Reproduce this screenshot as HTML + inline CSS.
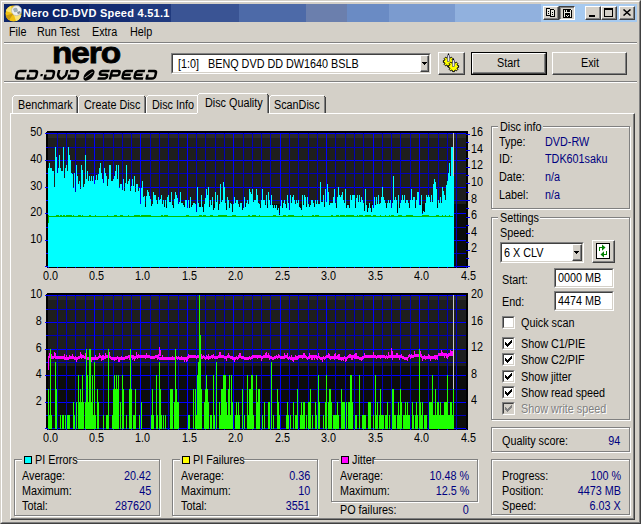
<!DOCTYPE html><html><head><meta charset="utf-8"><style>
html,body{margin:0;padding:0;}
body{width:641px;height:524px;overflow:hidden;background:#d4d0c8;position:relative;font-family:"Liberation Sans",sans-serif;}
.o{position:absolute;}
.t{font:12px/13px "Liberation Sans",sans-serif;white-space:pre;transform:scaleX(0.9);transform-origin:0 0;}
.r{transform-origin:100% 0;}
svg{display:block}
</style></head><body><div style="position:absolute;left:0;top:0;width:641px;height:524px;box-sizing:border-box;border-top:1px solid #d4d0c8;border-left:1px solid #d4d0c8;border-right:1px solid #404040;border-bottom:1px solid #404040;"></div>
<div style="position:absolute;left:1px;top:1px;width:639px;height:522px;box-sizing:border-box;border-top:1px solid #fff;border-left:1px solid #fff;border-right:1px solid #808080;border-bottom:1px solid #808080;"></div>
<div style="position:absolute;left:4px;top:4px;width:633px;height:18px;background:linear-gradient(to right,#0c2468 0px,#0c2468 85px,#142c72 85px,#142c72 126px,#203a7e 126px,#203a7e 167px,#3a5494 167px,#3a5494 235px,#4d6aa8 235px,#4d6aa8 302px,#6b7fad 302px,#6b7fad 343px,#6a8bc4 343px,#6a8bc4 385px,#7b9bcf 385px,#7b9bcf 451px,#91b1de 451px,#91b1de 537px,#a6caf0 537px,#a6caf0 633px);"></div>
<svg style="position:absolute;left:5px;top:5px" width="17" height="17" viewBox="0 0 17 17"><circle cx="8.5" cy="8.5" r="8" fill="#f0c010"/><path d="M8.5 8.5 L0.8 6 A8 8 0 0 1 6 0.9z" fill="#fae46a"/><path d="M8.5 8.5 L4 15.2 A8 8 0 0 1 0.6 10.5z" fill="#c89a10"/><path d="M8.5 8.5 L16.4 10 A8 8 0 0 1 11 16.1z" fill="#f8e27a"/><circle cx="11.6" cy="5.6" r="5" fill="#f0f0f0"/><path d="M8 4 Q10 2 12 3 L13 6 Q11 8 9 7z" fill="#a0b0b8"/><path d="M12 7 L15 6 L15.5 8 L13 9.5z" fill="#889098"/><circle cx="11.6" cy="5.6" r="5" fill="none" stroke="#b0b0a0" stroke-width="0.6"/></svg>
<div style="position:absolute;left:23px;top:7px;font:bold 11px/13px 'Liberation Sans',sans-serif;color:#fff;letter-spacing:0.25px;white-space:pre">Nero CD-DVD Speed 4.51.1</div>
<div style="position:absolute;left:543px;top:6px;width:16px;height:14px;box-sizing:border-box;border-top:1px solid #fff;border-left:1px solid #fff;border-right:1px solid #404040;border-bottom:1px solid #404040;background:#d4d0c8;"><div style="position:absolute;left:0;top:0;right:0;bottom:0;border-right:1px solid #808080;border-bottom:1px solid #808080;"></div></div>
<div style="position:absolute;left:546px;top:8px;width:4px;height:1px;background:#000"></div><div style="position:absolute;left:550px;top:9px;width:1px;height:1px;background:#000"></div><div style="position:absolute;left:546px;top:8px;width:1px;height:8px;background:#000"></div><div style="position:absolute;left:546px;top:15px;width:5px;height:1px;background:#000"></div><div style="position:absolute;left:550px;top:9px;width:1px;height:7px;background:#000"></div><div style="position:absolute;left:550px;top:9px;width:4px;height:1px;background:#000"></div><div style="position:absolute;left:554px;top:10px;width:1px;height:1px;background:#000"></div><div style="position:absolute;left:550px;top:16px;width:5px;height:1px;background:#000"></div><div style="position:absolute;left:554px;top:10px;width:1px;height:7px;background:#000"></div>
<div style="position:absolute;left:547px;top:9px;width:3px;height:6px;background:#e8e8e0"></div><div style="position:absolute;left:551px;top:10px;width:3px;height:6px;background:#e8e8e0"></div>
<div style="position:absolute;left:548px;top:11px;width:1px;height:1px;background:#000"></div><div style="position:absolute;left:548px;top:13px;width:1px;height:1px;background:#000"></div><div style="position:absolute;left:552px;top:12px;width:1px;height:1px;background:#000"></div><div style="position:absolute;left:552px;top:14px;width:1px;height:1px;background:#000"></div>
<div style="position:absolute;left:559px;top:6px;width:16px;height:14px;box-sizing:border-box;border-top:1px solid #404040;border-left:1px solid #404040;border-right:1px solid #fff;border-bottom:1px solid #fff;background:#d4d0c8"><div style="position:absolute;left:0;top:0;right:0;bottom:0;border-top:1px solid #808080;border-left:1px solid #808080;"></div></div>
<div style="position:absolute;left:563px;top:9px;width:9px;height:9px;background:#000"></div>
<div style="position:absolute;left:564px;top:10px;width:1px;height:7px;background:#e8e8e0"></div><div style="position:absolute;left:570px;top:10px;width:1px;height:7px;background:#e8e8e0"></div><div style="position:absolute;left:564px;top:12px;width:7px;height:2px;background:#e8e8e0"></div><div style="position:absolute;left:566px;top:10px;width:1px;height:2px;background:#e8e8e0"></div><div style="position:absolute;left:566px;top:15px;width:1px;height:1px;background:#e8e8e0"></div><div style="position:absolute;left:567px;top:16px;width:1px;height:1px;background:#e8e8e0"></div><div style="position:absolute;left:568px;top:15px;width:1px;height:1px;background:#e8e8e0"></div><div style="position:absolute;left:571px;top:9px;width:1px;height:1px;background:#e8e8e0"></div>
<div style="position:absolute;left:565px;top:13px;width:5px;height:1px;background:#000"></div>
<div style="position:absolute;left:585px;top:6px;width:16px;height:14px;box-sizing:border-box;border-top:1px solid #fff;border-left:1px solid #fff;border-right:1px solid #404040;border-bottom:1px solid #404040;background:#d4d0c8;"><div style="position:absolute;left:0;top:0;right:0;bottom:0;border-right:1px solid #808080;border-bottom:1px solid #808080;"></div></div>
<div style="position:absolute;left:589px;top:15px;width:6px;height:2px;background:#000"></div>
<div style="position:absolute;left:601px;top:6px;width:16px;height:14px;box-sizing:border-box;border-top:1px solid #fff;border-left:1px solid #fff;border-right:1px solid #404040;border-bottom:1px solid #404040;background:#d4d0c8;"><div style="position:absolute;left:0;top:0;right:0;bottom:0;border-right:1px solid #808080;border-bottom:1px solid #808080;"></div></div>
<div style="position:absolute;left:604px;top:8px;width:9px;height:9px;box-sizing:border-box;border:1px solid #000;border-top-width:2px"></div>
<div style="position:absolute;left:619px;top:6px;width:16px;height:14px;box-sizing:border-box;border-top:1px solid #fff;border-left:1px solid #fff;border-right:1px solid #404040;border-bottom:1px solid #404040;background:#d4d0c8;"><div style="position:absolute;left:0;top:0;right:0;bottom:0;border-right:1px solid #808080;border-bottom:1px solid #808080;"></div></div>
<svg style="position:absolute;left:623px;top:9px" width="8" height="7"><path d="M0.5 0.5 L7.5 6.5 M7.5 0.5 L0.5 6.5" stroke="#000" stroke-width="1.5"/></svg>
<div class="o" style="left:9px;top:26px;"><div class="t" style="color:#000;">File</div></div>
<div class="o" style="left:37px;top:26px;"><div class="t" style="color:#000;">Run Test</div></div>
<div class="o" style="left:92px;top:26px;"><div class="t" style="color:#000;">Extra</div></div>
<div class="o" style="left:130px;top:26px;"><div class="t" style="color:#000;">Help</div></div>
<div style="position:absolute;left:4px;top:42px;width:633px;height:1px;background:#808080"></div>
<div style="position:absolute;left:4px;top:43px;width:633px;height:1px;background:#fff"></div>
<div style="position:absolute;left:4px;top:81px;width:633px;height:1px;background:#808080"></div>
<div style="position:absolute;left:4px;top:82px;width:633px;height:1px;background:#fff"></div><svg style="position:absolute;left:0;top:40px" width="170" height="44" viewBox="0 0 170 44"><text x="52" y="22.6" font-family="Liberation Sans" font-weight="bold" font-size="30" textLength="68" lengthAdjust="spacingAndGlyphs" stroke="#000" stroke-width="0.8" letter-spacing="-1">nero</text></svg>
<svg style="position:absolute;left:0;top:0" width="170" height="90" viewBox="0 0 170 90"><g transform="translate(0 79) skewX(-14) translate(0 -79)"><g fill="none" stroke="#000" stroke-width="2.5" stroke-linejoin="round"><path transform="translate(14.5 70)" d="M10 1 H3.5 Q1 1 1 3.5 V6 Q1 8.5 3.5 8.5 H10"/><path transform="translate(26.5 70)" d="M0.5 1 H6.5 Q9 1 9 3.5 V6 Q9 8.5 6.5 8.5 H1 V4.5"/><path transform="translate(43.5 70)" d="M0.5 1 H6.5 Q9 1 9 3.5 V6 Q9 8.5 6.5 8.5 H1 V4.5"/><path transform="translate(56 70)" d="M1 0 V4.5 Q1 5.5 2 6.5 L4 8.5 H6 L8 6.5 Q9 5.5 9 4.5 V0"/><path transform="translate(67.5 70)" d="M0.5 1 H6.5 Q9 1 9 3.5 V6 Q9 8.5 6.5 8.5 H1 V4.5"/><path transform="translate(97.5 70)" d="M10 1 H3 Q1 1 1 2.8 Q1 4.7 3 4.7 H7 Q9 4.7 9 6.6 Q9 8.5 7 8.5 H0"/><path transform="translate(109 70)" d="M1 9.5 V1 H7 Q9 1 9 3 V3.6 Q9 5.6 7 5.6 H2"/><path transform="translate(121 70)" d="M10 1 H3.5 Q1 1 1 3.5 V6 Q1 8.5 3.5 8.5 H10 M2 4.75 H8.5"/><path transform="translate(133 70)" d="M10 1 H3.5 Q1 1 1 3.5 V6 Q1 8.5 3.5 8.5 H10 M2 4.75 H8.5"/><path transform="translate(145.5 70)" d="M0.5 1 H6.5 Q9 1 9 3.5 V6 Q9 8.5 6.5 8.5 H1 V4.5"/></g><rect x="39.5" y="74" width="2.2" height="2.2" fill="#000"/><ellipse cx="88" cy="75" rx="4.2" ry="6.2" transform="rotate(35 88 75)" fill="#000"/><path d="M84.5 78 L91 72" stroke="#d4d0c8" stroke-width="1"/></g></svg>
<div style="position:absolute;left:171px;top:53px;width:260px;height:21px;box-sizing:border-box;border-top:1px solid #808080;border-left:1px solid #808080;border-right:1px solid #fff;border-bottom:1px solid #fff;"><div style="position:absolute;left:0;top:0;right:0;bottom:0;border-top:1px solid #404040;border-left:1px solid #404040;border-right:1px solid #d4d0c8;border-bottom:1px solid #d4d0c8;background:#fff"></div></div>
<div style="position:absolute;left:420px;top:55px;width:9px;height:17px;box-sizing:border-box;border-top:1px solid #fff;border-left:1px solid #fff;border-right:1px solid #404040;border-bottom:1px solid #404040;background:#d4d0c8;"><div style="position:absolute;left:0;top:0;right:0;bottom:0;border-right:1px solid #808080;border-bottom:1px solid #808080;"></div></div>
<div style="position:absolute;left:422px;top:62px;width:5px;height:1px;background:#000"></div><div style="position:absolute;left:423px;top:63px;width:3px;height:1px;background:#000"></div><div style="position:absolute;left:424px;top:64px;width:1px;height:1px;background:#000"></div>
<div class="o" style="left:178px;top:58px;"><div class="t" style="color:#000;">[1:0]   BENQ DVD DD DW1640 BSLB</div></div>
<div style="position:absolute;left:438px;top:52px;width:27px;height:23px;box-sizing:border-box;border-top:1px solid #fff;border-left:1px solid #fff;border-right:1px solid #404040;border-bottom:1px solid #404040;background:#d4d0c8;"><div style="position:absolute;left:0;top:0;right:0;bottom:0;border-right:1px solid #808080;border-bottom:1px solid #808080;"></div></div>
<svg style="position:absolute;left:438px;top:52px" width="27" height="23" viewBox="0 0 27 23"><polygon points="14.17,8.18 15.61,8.53 15.61,10.47 14.17,10.82 14.03,11.16 14.80,12.42 13.42,13.80 12.16,13.03 11.82,13.17 11.47,14.61 9.53,14.61 9.18,13.17 8.84,13.03 7.58,13.80 6.20,12.42 6.97,11.16 6.83,10.82 5.39,10.47 5.39,8.53 6.83,8.18 6.97,7.84 6.20,6.58 7.58,5.20 8.84,5.97 9.18,5.83 9.53,4.39 11.47,4.39 11.82,5.83 12.16,5.97 13.42,5.20 14.80,6.58 14.03,7.84" fill="#ffff00" stroke="#000" stroke-width="1"/><polygon points="19.17,13.18 20.61,13.53 20.61,15.47 19.17,15.82 19.03,16.16 19.80,17.42 18.42,18.80 17.16,18.03 16.82,18.17 16.47,19.61 14.53,19.61 14.18,18.17 13.84,18.03 12.58,18.80 11.20,17.42 11.97,16.16 11.83,15.82 10.39,15.47 10.39,13.53 11.83,13.18 11.97,12.84 11.20,11.58 12.58,10.20 13.84,10.97 14.18,10.83 14.53,9.39 16.47,9.39 16.82,10.83 17.16,10.97 18.42,10.20 19.80,11.58 19.03,12.84" fill="#ffff00" stroke="#000" stroke-width="1"/><rect x="9.5" y="3" width="2" height="6.5" fill="#e8e8f0" stroke="#404060" stroke-width="0.6"/><rect x="14.5" y="8" width="2" height="6.5" fill="#e8e8f0" stroke="#404060" stroke-width="0.6"/><rect x="10" y="1.5" width="1" height="1.5" fill="#000"/><rect x="15" y="6.5" width="1" height="1.5" fill="#000"/></svg>
<div style="position:absolute;left:471px;top:52px;width:76px;height:23px;box-sizing:border-box;border:1px solid #000"></div>
<div style="position:absolute;left:472px;top:53px;width:74px;height:21px;box-sizing:border-box;border-top:1px solid #fff;border-left:1px solid #fff;border-right:1px solid #404040;border-bottom:1px solid #404040;background:#d4d0c8;"><div style="position:absolute;left:0;top:0;right:0;bottom:0;border-right:1px solid #808080;border-bottom:1px solid #808080;"></div></div>
<div class="o" style="left:497px;top:57px;"><div class="t" style="color:#000;">Start</div></div>
<div style="position:absolute;left:552px;top:52px;width:75px;height:23px;box-sizing:border-box;border-top:1px solid #fff;border-left:1px solid #fff;border-right:1px solid #404040;border-bottom:1px solid #404040;background:#d4d0c8;"><div style="position:absolute;left:0;top:0;right:0;bottom:0;border-right:1px solid #808080;border-bottom:1px solid #808080;"></div></div>
<div class="o" style="left:581px;top:57px;"><div class="t" style="color:#000;">Exit</div></div><div style="position:absolute;left:10px;top:113px;width:625px;height:407px;box-sizing:border-box;border-top:1px solid #fff;border-left:1px solid #fff;border-right:1px solid #404040;border-bottom:1px solid #404040;"><div style="position:absolute;left:0;top:0;right:0;bottom:0;border-right:1px solid #808080;border-bottom:1px solid #808080;"></div></div>
<div style="position:absolute;left:12px;top:97px;width:1px;height:16px;background:#fff"></div>
<div style="position:absolute;left:13px;top:96px;width:1px;height:1px;background:#fff"></div>
<div style="position:absolute;left:14px;top:95px;width:62px;height:1px;background:#fff"></div>
<div style="position:absolute;left:76px;top:96px;width:1px;height:17px;background:#808080"></div>
<div style="position:absolute;left:76px;top:96px;width:1px;height:1px;background:#404040"></div>
<div style="position:absolute;left:77px;top:97px;width:1px;height:16px;background:#404040"></div>
<div class="o" style="left:18px;top:99px;"><div class="t" style="color:#000;">Benchmark</div></div>
<div style="position:absolute;left:78px;top:97px;width:1px;height:16px;background:#fff"></div>
<div style="position:absolute;left:79px;top:96px;width:1px;height:1px;background:#fff"></div>
<div style="position:absolute;left:80px;top:95px;width:64px;height:1px;background:#fff"></div>
<div style="position:absolute;left:144px;top:96px;width:1px;height:17px;background:#808080"></div>
<div style="position:absolute;left:144px;top:96px;width:1px;height:1px;background:#404040"></div>
<div style="position:absolute;left:145px;top:97px;width:1px;height:16px;background:#404040"></div>
<div class="o" style="left:84px;top:99px;"><div class="t" style="color:#000;">Create Disc</div></div>
<div style="position:absolute;left:146px;top:97px;width:1px;height:16px;background:#fff"></div>
<div style="position:absolute;left:147px;top:96px;width:1px;height:1px;background:#fff"></div>
<div style="position:absolute;left:148px;top:95px;width:49px;height:1px;background:#fff"></div>
<div style="position:absolute;left:197px;top:96px;width:1px;height:17px;background:#808080"></div>
<div style="position:absolute;left:197px;top:96px;width:1px;height:1px;background:#404040"></div>
<div style="position:absolute;left:198px;top:97px;width:1px;height:16px;background:#404040"></div>
<div class="o" style="left:152px;top:99px;"><div class="t" style="color:#000;">Disc Info</div></div>
<div style="position:absolute;left:269px;top:97px;width:1px;height:16px;background:#fff"></div>
<div style="position:absolute;left:270px;top:96px;width:1px;height:1px;background:#fff"></div>
<div style="position:absolute;left:271px;top:95px;width:53px;height:1px;background:#fff"></div>
<div style="position:absolute;left:324px;top:96px;width:1px;height:17px;background:#808080"></div>
<div style="position:absolute;left:324px;top:96px;width:1px;height:1px;background:#404040"></div>
<div style="position:absolute;left:325px;top:97px;width:1px;height:16px;background:#404040"></div>
<div class="o" style="left:274px;top:99px;"><div class="t" style="color:#000;">ScanDisc</div></div>
<div style="position:absolute;left:197px;top:93px;width:72px;height:21px;background:#d4d0c8"></div>
<div style="position:absolute;left:197px;top:95px;width:1px;height:18px;background:#fff"></div>
<div style="position:absolute;left:198px;top:94px;width:1px;height:1px;background:#fff"></div>
<div style="position:absolute;left:199px;top:93px;width:68px;height:1px;background:#fff"></div>
<div style="position:absolute;left:267px;top:94px;width:1px;height:19px;background:#808080"></div>
<div style="position:absolute;left:267px;top:94px;width:1px;height:1px;background:#404040"></div>
<div style="position:absolute;left:268px;top:95px;width:1px;height:18px;background:#404040"></div>
<div class="o" style="left:205px;top:97px;"><div class="t" style="color:#000;">Disc Quality</div></div><svg style="position:absolute;left:0;top:0" width="641" height="524" shape-rendering="crispEdges"><rect x="46" y="131" width="422" height="137" fill="#000"/><rect x="48" y="133" width="418" height="71" fill="#1e1e1e"/><rect x="48" y="133" width="418" height="5" fill="#2a2a2a"/><rect x="48" y="204" width="418" height="63" fill="#0c0c0c"/><rect x="46" y="131" width="1" height="1" fill="#d4d0c8"/><rect x="46" y="267" width="1" height="1" fill="#d4d0c8"/><rect x="48" y="133" width="418" height="1" fill="#0000ff"/><rect x="48" y="147" width="418" height="1" fill="#0000b8"/><rect x="48" y="160" width="418" height="1" fill="#0000ff"/><rect x="48" y="173" width="418" height="1" fill="#0000b8"/><rect x="48" y="187" width="418" height="1" fill="#0000ff"/><rect x="48" y="200" width="418" height="1" fill="#0000b8"/><rect x="48" y="213" width="418" height="1" fill="#0000ff"/><rect x="48" y="227" width="418" height="1" fill="#0000b8"/><rect x="48" y="240" width="418" height="1" fill="#0000ff"/><rect x="48" y="253" width="418" height="1" fill="#0000b8"/><rect x="48" y="266" width="418" height="1" fill="#0000ff"/><rect x="57" y="133" width="1" height="134" fill="#0000b8"/><rect x="66" y="133" width="1" height="134" fill="#0000b8"/><rect x="75" y="133" width="1" height="134" fill="#0000b8"/><rect x="85" y="133" width="1" height="134" fill="#0000b8"/><rect x="94" y="133" width="1" height="134" fill="#0000ff"/><rect x="103" y="133" width="1" height="134" fill="#0000b8"/><rect x="113" y="133" width="1" height="134" fill="#0000b8"/><rect x="122" y="133" width="1" height="134" fill="#0000b8"/><rect x="131" y="133" width="1" height="134" fill="#0000b8"/><rect x="140" y="133" width="1" height="134" fill="#0000ff"/><rect x="150" y="133" width="1" height="134" fill="#0000b8"/><rect x="159" y="133" width="1" height="134" fill="#0000b8"/><rect x="168" y="133" width="1" height="134" fill="#0000b8"/><rect x="178" y="133" width="1" height="134" fill="#0000b8"/><rect x="187" y="133" width="1" height="134" fill="#0000ff"/><rect x="196" y="133" width="1" height="134" fill="#0000b8"/><rect x="205" y="133" width="1" height="134" fill="#0000b8"/><rect x="215" y="133" width="1" height="134" fill="#0000b8"/><rect x="224" y="133" width="1" height="134" fill="#0000b8"/><rect x="233" y="133" width="1" height="134" fill="#0000ff"/><rect x="243" y="133" width="1" height="134" fill="#0000b8"/><rect x="252" y="133" width="1" height="134" fill="#0000b8"/><rect x="261" y="133" width="1" height="134" fill="#0000b8"/><rect x="270" y="133" width="1" height="134" fill="#0000b8"/><rect x="280" y="133" width="1" height="134" fill="#0000ff"/><rect x="289" y="133" width="1" height="134" fill="#0000b8"/><rect x="298" y="133" width="1" height="134" fill="#0000b8"/><rect x="308" y="133" width="1" height="134" fill="#0000b8"/><rect x="317" y="133" width="1" height="134" fill="#0000b8"/><rect x="326" y="133" width="1" height="134" fill="#0000ff"/><rect x="335" y="133" width="1" height="134" fill="#0000b8"/><rect x="345" y="133" width="1" height="134" fill="#0000b8"/><rect x="354" y="133" width="1" height="134" fill="#0000b8"/><rect x="363" y="133" width="1" height="134" fill="#0000b8"/><rect x="373" y="133" width="1" height="134" fill="#0000ff"/><rect x="382" y="133" width="1" height="134" fill="#0000b8"/><rect x="391" y="133" width="1" height="134" fill="#0000b8"/><rect x="400" y="133" width="1" height="134" fill="#0000b8"/><rect x="410" y="133" width="1" height="134" fill="#0000b8"/><rect x="419" y="133" width="1" height="134" fill="#0000ff"/><rect x="428" y="133" width="1" height="134" fill="#0000b8"/><rect x="438" y="133" width="1" height="134" fill="#0000b8"/><rect x="447" y="133" width="1" height="134" fill="#0000b8"/><rect x="456" y="133" width="1" height="134" fill="#0000b8"/><rect x="453" y="133" width="1" height="134" fill="#c8c8c8"/><path d="M48 267 V168 H49 V163 H50 V168 H51 V168 H52 V171 H53 V171 H54 V187 H55 V147 H56 V157 H57 V173 H58 V168 H59 V155 H60 V168 H61 V171 H62 V171 H63 V147 H64 V178 H65 V168 H66 V165 H67 V171 H68 V147 H69 V155 H70 V160 H71 V173 H72 V174 H73 V188 H74 V173 H75 V192 H76 V165 H77 V176 H78 V184 H79 V181 H80 V189 H81 V165 H82 V170 H83 V187 H84 V184 H85 V155 H86 V179 H87 V171 H88 V181 H89 V176 H90 V181 H91 V176 H92 V181 H93 V176 H94 V184 H95 V180 H96 V175 H97 V180 H98 V174 H99 V168 H100 V163 H101 V173 H102 V179 H103 V183 H104 V168 H105 V173 H106 V176 H107 V186 H108 V179 H109 V165 H110 V165 H111 V181 H112 V181 H113 V179 H114 V176 H115 V171 H116 V165 H117 V179 H118 V165 H119 V188 H120 V184 H121 V184 H122 V190 H123 V179 H124 V191 H125 V183 H126 V165 H127 V184 H128 V181 H129 V179 H130 V191 H131 V186 H132 V179 H133 V186 H134 V176 H135 V192 H136 V184 H137 V184 H138 V191 H139 V188 H140 V204 H141 V188 H142 V181 H143 V197 H144 V196 H145 V207 H146 V196 H147 V190 H148 V192 H149 V196 H150 V199 H151 V206 H152 V204 H153 V192 H154 V195 H155 V195 H156 V200 H157 V204 H158 V197 H159 V200 H160 V199 H161 V195 H162 V204 H163 V200 H164 V207 H165 V200 H166 V208 H167 V197 H168 V195 H169 V202 H170 V202 H171 V192 H172 V205 H173 V208 H174 V199 H175 V192 H176 V195 H177 V198 H178 V204 H179 V202 H180 V192 H181 V203 H182 V203 H183 V205 H184 V207 H185 V200 H186 V200 H187 V208 H188 V200 H189 V208 H190 V197 H191 V207 H192 V205 H193 V203 H194 V203 H195 V204 H196 V212 H197 V187 H198 V203 H199 V207 H200 V207 H201 V195 H202 V207 H203 V212 H204 V204 H205 V198 H206 V189 H207 V195 H208 V187 H209 V207 H210 V200 H211 V205 H212 V197 H213 V210 H214 V208 H215 V192 H216 V202 H217 V195 H218 V210 H219 V204 H220 V184 H221 V202 H222 V200 H223 V182 H224 V187 H225 V203 H226 V210 H227 V197 H228 V200 H229 V208 H230 V203 H231 V204 H232 V212 H233 V204 H234 V197 H235 V203 H236 V200 H237 V200 H238 V204 H239 V207 H240 V203 H241 V203 H242 V210 H243 V208 H244 V197 H245 V207 H246 V203 H247 V200 H248 V204 H249 V189 H250 V192 H251 V194 H252 V189 H253 V202 H254 V200 H255 V200 H256 V189 H257 V195 H258 V203 H259 V204 H260 V208 H261 V200 H262 V189 H263 V200 H264 V200 H265 V205 H266 V195 H267 V208 H268 V192 H269 V200 H270 V205 H271 V195 H272 V205 H273 V208 H274 V205 H275 V208 H276 V205 H277 V210 H278 V208 H279 V215 H280 V206 H281 V200 H282 V208 H283 V203 H284 V200 H285 V204 H286 V208 H287 V195 H288 V203 H289 V210 H290 V195 H291 V203 H292 V197 H293 V195 H294 V200 H295 V204 H296 V200 H297 V203 H298 V200 H299 V207 H300 V208 H301 V210 H302 V195 H303 V205 H304 V195 H305 V197 H306 V207 H307 V197 H308 V204 H309 V207 H310 V205 H311 V200 H312 V200 H313 V203 H314 V207 H315 V200 H316 V204 H317 V200 H318 V204 H319 V204 H320 V182 H321 V202 H322 V202 H323 V195 H324 V207 H325 V189 H326 V202 H327 V184 H328 V192 H329 V205 H330 V203 H331 V203 H332 V203 H333 V197 H334 V189 H335 V203 H336 V208 H337 V197 H338 V187 H339 V195 H340 V197 H341 V195 H342 V192 H343 V200 H344 V203 H345 V189 H346 V208 H347 V205 H348 V205 H349 V208 H350 V195 H351 V200 H352 V195 H353 V195 H354 V195 H355 V208 H356 V198 H357 V195 H358 V202 H359 V195 H360 V202 H361 V197 H362 V200 H363 V203 H364 V211 H365 V189 H366 V205 H367 V212 H368 V208 H369 V203 H370 V208 H371 V212 H372 V205 H373 V208 H374 V197 H375 V205 H376 V197 H377 V204 H378 V195 H379 V204 H380 V203 H381 V197 H382 V187 H383 V197 H384 V200 H385 V203 H386 V208 H387 V203 H388 V200 H389 V203 H390 V200 H391 V208 H392 V203 H393 V176 H394 V200 H395 V197 H396 V200 H397 V213 H398 V195 H399 V208 H400 V203 H401 V200 H402 V195 H403 V200 H404 V195 H405 V203 H406 V200 H407 V200 H408 V203 H409 V208 H410 V200 H411 V189 H412 V200 H413 V197 H414 V197 H415 V208 H416 V200 H417 V192 H418 V192 H419 V205 H420 V205 H421 V195 H422 V214 H423 V211 H424 V212 H425 V203 H426 V195 H427 V197 H428 V195 H429 V197 H430 V202 H431 V195 H432 V202 H433 V184 H434 V179 H435 V182 H436 V189 H437 V208 H438 V200 H439 V203 H440 V197 H441 V203 H442 V187 H443 V191 H444 V195 H445 V200 H446 V185 H447 V181 H448 V173 H449 V163 H450 V176 H451 V147 H452 V147 H453 V176 H454 V267 Z" fill="#00ffff"/><rect x="48" y="216" width="405" height="1" fill="#00c000"/><rect x="56" y="215" width="2" height="1" fill="#00c000"/><rect x="58" y="215" width="1" height="1" fill="#00c000"/><rect x="60" y="215" width="2" height="1" fill="#00c000"/><rect x="63" y="215" width="1" height="1" fill="#00c000"/><rect x="64" y="215" width="1" height="1" fill="#00c000"/><rect x="66" y="215" width="2" height="1" fill="#00c000"/><rect x="67" y="215" width="1" height="1" fill="#00c000"/><rect x="68" y="215" width="3" height="1" fill="#00c000"/><rect x="70" y="215" width="1" height="1" fill="#00c000"/><rect x="71" y="215" width="1" height="1" fill="#00c000"/><rect x="73" y="215" width="1" height="1" fill="#00c000"/><rect x="78" y="215" width="3" height="1" fill="#00c000"/><rect x="79" y="215" width="2" height="1" fill="#00c000"/><rect x="82" y="215" width="1" height="1" fill="#00c000"/><rect x="89" y="215" width="2" height="1" fill="#00c000"/><rect x="95" y="215" width="1" height="1" fill="#00c000"/><rect x="107" y="215" width="1" height="1" fill="#00c000"/><rect x="114" y="215" width="3" height="1" fill="#00c000"/><rect x="120" y="215" width="3" height="1" fill="#00c000"/><rect x="128" y="215" width="1" height="1" fill="#00c000"/><rect x="134" y="215" width="3" height="1" fill="#00c000"/><rect x="137" y="215" width="3" height="1" fill="#00c000"/><rect x="141" y="215" width="3" height="1" fill="#00c000"/><rect x="142" y="215" width="2" height="1" fill="#00c000"/><rect x="144" y="215" width="3" height="1" fill="#00c000"/><rect x="146" y="215" width="2" height="1" fill="#00c000"/><rect x="147" y="215" width="2" height="1" fill="#00c000"/><rect x="149" y="215" width="2" height="1" fill="#00c000"/><rect x="161" y="215" width="2" height="1" fill="#00c000"/><rect x="164" y="215" width="2" height="1" fill="#00c000"/><rect x="166" y="215" width="2" height="1" fill="#00c000"/><rect x="186" y="215" width="3" height="1" fill="#00c000"/><rect x="199" y="215" width="3" height="1" fill="#00c000"/><rect x="203" y="215" width="1" height="1" fill="#00c000"/><rect x="204" y="215" width="2" height="1" fill="#00c000"/><rect x="210" y="215" width="3" height="1" fill="#00c000"/><rect x="218" y="215" width="3" height="1" fill="#00c000"/><rect x="221" y="215" width="3" height="1" fill="#00c000"/><rect x="222" y="215" width="3" height="1" fill="#00c000"/><rect x="223" y="215" width="2" height="1" fill="#00c000"/><rect x="225" y="215" width="1" height="1" fill="#00c000"/><rect x="226" y="215" width="1" height="1" fill="#00c000"/><rect x="232" y="215" width="1" height="1" fill="#00c000"/><rect x="233" y="215" width="2" height="1" fill="#00c000"/><rect x="234" y="215" width="2" height="1" fill="#00c000"/><rect x="248" y="215" width="2" height="1" fill="#00c000"/><rect x="252" y="215" width="3" height="1" fill="#00c000"/><rect x="255" y="215" width="1" height="1" fill="#00c000"/><rect x="259" y="215" width="1" height="1" fill="#00c000"/><rect x="273" y="215" width="3" height="1" fill="#00c000"/><rect x="283" y="215" width="3" height="1" fill="#00c000"/><rect x="285" y="215" width="1" height="1" fill="#00c000"/><rect x="288" y="215" width="3" height="1" fill="#00c000"/><rect x="290" y="215" width="2" height="1" fill="#00c000"/><rect x="292" y="215" width="2" height="1" fill="#00c000"/><rect x="302" y="215" width="1" height="1" fill="#00c000"/><rect x="312" y="215" width="2" height="1" fill="#00c000"/><rect x="315" y="215" width="3" height="1" fill="#00c000"/><rect x="317" y="215" width="2" height="1" fill="#00c000"/><rect x="331" y="215" width="2" height="1" fill="#00c000"/><rect x="336" y="215" width="3" height="1" fill="#00c000"/><rect x="340" y="215" width="3" height="1" fill="#00c000"/><rect x="342" y="215" width="3" height="1" fill="#00c000"/><rect x="343" y="215" width="1" height="1" fill="#00c000"/><rect x="346" y="215" width="3" height="1" fill="#00c000"/><rect x="348" y="215" width="2" height="1" fill="#00c000"/><rect x="350" y="215" width="1" height="1" fill="#00c000"/><rect x="351" y="215" width="3" height="1" fill="#00c000"/><rect x="353" y="215" width="1" height="1" fill="#00c000"/><rect x="357" y="215" width="1" height="1" fill="#00c000"/><rect x="359" y="215" width="3" height="1" fill="#00c000"/><rect x="360" y="215" width="3" height="1" fill="#00c000"/><rect x="361" y="215" width="2" height="1" fill="#00c000"/><rect x="365" y="215" width="2" height="1" fill="#00c000"/><rect x="367" y="215" width="2" height="1" fill="#00c000"/><rect x="368" y="215" width="3" height="1" fill="#00c000"/><rect x="373" y="215" width="3" height="1" fill="#00c000"/><rect x="380" y="215" width="1" height="1" fill="#00c000"/><rect x="385" y="215" width="1" height="1" fill="#00c000"/><rect x="389" y="215" width="1" height="1" fill="#00c000"/><rect x="391" y="215" width="3" height="1" fill="#00c000"/><rect x="392" y="215" width="1" height="1" fill="#00c000"/><rect x="398" y="215" width="3" height="1" fill="#00c000"/><rect x="399" y="215" width="3" height="1" fill="#00c000"/><rect x="406" y="215" width="3" height="1" fill="#00c000"/><rect x="408" y="215" width="3" height="1" fill="#00c000"/><rect x="411" y="215" width="2" height="1" fill="#00c000"/><rect x="422" y="215" width="3" height="1" fill="#00c000"/><rect x="423" y="215" width="1" height="1" fill="#00c000"/><rect x="425" y="215" width="1" height="1" fill="#00c000"/><rect x="426" y="215" width="1" height="1" fill="#00c000"/><rect x="427" y="215" width="2" height="1" fill="#00c000"/><rect x="436" y="215" width="3" height="1" fill="#00c000"/><rect x="437" y="215" width="2" height="1" fill="#00c000"/><rect x="442" y="215" width="1" height="1" fill="#00c000"/><rect x="445" y="215" width="1" height="1" fill="#00c000"/><rect x="449" y="215" width="1" height="1" fill="#00c000"/><rect x="48" y="215" width="1" height="8" fill="#00c000"/><rect x="45" y="133" width="3" height="1" fill="#0000ff"/><rect x="46" y="147" width="2" height="1" fill="#0000ff"/><rect x="45" y="160" width="3" height="1" fill="#0000ff"/><rect x="46" y="173" width="2" height="1" fill="#0000ff"/><rect x="45" y="187" width="3" height="1" fill="#0000ff"/><rect x="46" y="200" width="2" height="1" fill="#0000ff"/><rect x="45" y="213" width="3" height="1" fill="#0000ff"/><rect x="46" y="227" width="2" height="1" fill="#0000ff"/><rect x="45" y="240" width="3" height="1" fill="#0000ff"/><rect x="46" y="253" width="2" height="1" fill="#0000ff"/><rect x="45" y="266" width="3" height="1" fill="#0000ff"/><rect x="466" y="134" width="4" height="1" fill="#0000ff"/><rect x="466" y="142" width="3" height="1" fill="#0000ff"/><rect x="466" y="150" width="4" height="1" fill="#0000ff"/><rect x="466" y="158" width="3" height="1" fill="#0000ff"/><rect x="466" y="167" width="4" height="1" fill="#0000ff"/><rect x="466" y="175" width="3" height="1" fill="#0000ff"/><rect x="466" y="183" width="4" height="1" fill="#0000ff"/><rect x="466" y="192" width="3" height="1" fill="#0000ff"/><rect x="466" y="200" width="4" height="1" fill="#0000ff"/><rect x="466" y="208" width="3" height="1" fill="#0000ff"/><rect x="466" y="217" width="4" height="1" fill="#0000ff"/><rect x="466" y="225" width="3" height="1" fill="#0000ff"/><rect x="466" y="233" width="4" height="1" fill="#0000ff"/><rect x="466" y="242" width="3" height="1" fill="#0000ff"/><rect x="466" y="250" width="4" height="1" fill="#0000ff"/><rect x="466" y="258" width="3" height="1" fill="#0000ff"/><rect x="466" y="266" width="4" height="1" fill="#0000ff"/><rect x="48" y="267" width="1" height="1" fill="#0000ff"/><rect x="57" y="267" width="1" height="1" fill="#0000ff"/><rect x="66" y="267" width="1" height="1" fill="#0000ff"/><rect x="75" y="267" width="1" height="1" fill="#0000ff"/><rect x="85" y="267" width="1" height="1" fill="#0000ff"/><rect x="94" y="267" width="1" height="1" fill="#0000ff"/><rect x="103" y="267" width="1" height="1" fill="#0000ff"/><rect x="113" y="267" width="1" height="1" fill="#0000ff"/><rect x="122" y="267" width="1" height="1" fill="#0000ff"/><rect x="131" y="267" width="1" height="1" fill="#0000ff"/><rect x="140" y="267" width="1" height="1" fill="#0000ff"/><rect x="150" y="267" width="1" height="1" fill="#0000ff"/><rect x="159" y="267" width="1" height="1" fill="#0000ff"/><rect x="168" y="267" width="1" height="1" fill="#0000ff"/><rect x="178" y="267" width="1" height="1" fill="#0000ff"/><rect x="187" y="267" width="1" height="1" fill="#0000ff"/><rect x="196" y="267" width="1" height="1" fill="#0000ff"/><rect x="205" y="267" width="1" height="1" fill="#0000ff"/><rect x="215" y="267" width="1" height="1" fill="#0000ff"/><rect x="224" y="267" width="1" height="1" fill="#0000ff"/><rect x="233" y="267" width="1" height="1" fill="#0000ff"/><rect x="243" y="267" width="1" height="1" fill="#0000ff"/><rect x="252" y="267" width="1" height="1" fill="#0000ff"/><rect x="261" y="267" width="1" height="1" fill="#0000ff"/><rect x="270" y="267" width="1" height="1" fill="#0000ff"/><rect x="280" y="267" width="1" height="1" fill="#0000ff"/><rect x="289" y="267" width="1" height="1" fill="#0000ff"/><rect x="298" y="267" width="1" height="1" fill="#0000ff"/><rect x="308" y="267" width="1" height="1" fill="#0000ff"/><rect x="317" y="267" width="1" height="1" fill="#0000ff"/><rect x="326" y="267" width="1" height="1" fill="#0000ff"/><rect x="335" y="267" width="1" height="1" fill="#0000ff"/><rect x="345" y="267" width="1" height="1" fill="#0000ff"/><rect x="354" y="267" width="1" height="1" fill="#0000ff"/><rect x="363" y="267" width="1" height="1" fill="#0000ff"/><rect x="373" y="267" width="1" height="1" fill="#0000ff"/><rect x="382" y="267" width="1" height="1" fill="#0000ff"/><rect x="391" y="267" width="1" height="1" fill="#0000ff"/><rect x="400" y="267" width="1" height="1" fill="#0000ff"/><rect x="410" y="267" width="1" height="1" fill="#0000ff"/><rect x="419" y="267" width="1" height="1" fill="#0000ff"/><rect x="428" y="267" width="1" height="1" fill="#0000ff"/><rect x="438" y="267" width="1" height="1" fill="#0000ff"/><rect x="447" y="267" width="1" height="1" fill="#0000ff"/><rect x="456" y="267" width="1" height="1" fill="#0000ff"/><rect x="466" y="267" width="1" height="1" fill="#0000ff"/><rect x="46" y="293" width="422" height="137" fill="#000"/><rect x="48" y="295" width="418" height="71" fill="#1e1e1e"/><rect x="48" y="295" width="418" height="5" fill="#2a2a2a"/><rect x="48" y="366" width="418" height="63" fill="#0c0c0c"/><rect x="46" y="293" width="1" height="1" fill="#d4d0c8"/><rect x="46" y="429" width="1" height="1" fill="#d4d0c8"/><rect x="48" y="295" width="418" height="1" fill="#0000ff"/><rect x="48" y="309" width="418" height="1" fill="#0000b8"/><rect x="48" y="322" width="418" height="1" fill="#0000ff"/><rect x="48" y="335" width="418" height="1" fill="#0000b8"/><rect x="48" y="349" width="418" height="1" fill="#0000ff"/><rect x="48" y="362" width="418" height="1" fill="#0000b8"/><rect x="48" y="375" width="418" height="1" fill="#0000ff"/><rect x="48" y="389" width="418" height="1" fill="#0000b8"/><rect x="48" y="402" width="418" height="1" fill="#0000ff"/><rect x="48" y="415" width="418" height="1" fill="#0000b8"/><rect x="48" y="428" width="418" height="1" fill="#0000ff"/><rect x="57" y="295" width="1" height="134" fill="#0000b8"/><rect x="66" y="295" width="1" height="134" fill="#0000b8"/><rect x="75" y="295" width="1" height="134" fill="#0000b8"/><rect x="85" y="295" width="1" height="134" fill="#0000b8"/><rect x="94" y="295" width="1" height="134" fill="#0000ff"/><rect x="103" y="295" width="1" height="134" fill="#0000b8"/><rect x="113" y="295" width="1" height="134" fill="#0000b8"/><rect x="122" y="295" width="1" height="134" fill="#0000b8"/><rect x="131" y="295" width="1" height="134" fill="#0000b8"/><rect x="140" y="295" width="1" height="134" fill="#0000ff"/><rect x="150" y="295" width="1" height="134" fill="#0000b8"/><rect x="159" y="295" width="1" height="134" fill="#0000b8"/><rect x="168" y="295" width="1" height="134" fill="#0000b8"/><rect x="178" y="295" width="1" height="134" fill="#0000b8"/><rect x="187" y="295" width="1" height="134" fill="#0000ff"/><rect x="196" y="295" width="1" height="134" fill="#0000b8"/><rect x="205" y="295" width="1" height="134" fill="#0000b8"/><rect x="215" y="295" width="1" height="134" fill="#0000b8"/><rect x="224" y="295" width="1" height="134" fill="#0000b8"/><rect x="233" y="295" width="1" height="134" fill="#0000ff"/><rect x="243" y="295" width="1" height="134" fill="#0000b8"/><rect x="252" y="295" width="1" height="134" fill="#0000b8"/><rect x="261" y="295" width="1" height="134" fill="#0000b8"/><rect x="270" y="295" width="1" height="134" fill="#0000b8"/><rect x="280" y="295" width="1" height="134" fill="#0000ff"/><rect x="289" y="295" width="1" height="134" fill="#0000b8"/><rect x="298" y="295" width="1" height="134" fill="#0000b8"/><rect x="308" y="295" width="1" height="134" fill="#0000b8"/><rect x="317" y="295" width="1" height="134" fill="#0000b8"/><rect x="326" y="295" width="1" height="134" fill="#0000ff"/><rect x="335" y="295" width="1" height="134" fill="#0000b8"/><rect x="345" y="295" width="1" height="134" fill="#0000b8"/><rect x="354" y="295" width="1" height="134" fill="#0000b8"/><rect x="363" y="295" width="1" height="134" fill="#0000b8"/><rect x="373" y="295" width="1" height="134" fill="#0000ff"/><rect x="382" y="295" width="1" height="134" fill="#0000b8"/><rect x="391" y="295" width="1" height="134" fill="#0000b8"/><rect x="400" y="295" width="1" height="134" fill="#0000b8"/><rect x="410" y="295" width="1" height="134" fill="#0000b8"/><rect x="419" y="295" width="1" height="134" fill="#0000ff"/><rect x="428" y="295" width="1" height="134" fill="#0000b8"/><rect x="438" y="295" width="1" height="134" fill="#0000b8"/><rect x="447" y="295" width="1" height="134" fill="#0000b8"/><rect x="456" y="295" width="1" height="134" fill="#0000b8"/><rect x="48" y="356" width="1" height="3" fill="#ff00ff"/><rect x="49" y="355" width="1" height="3" fill="#ff00ff"/><rect x="49" y="353" width="1" height="2" fill="#ff00ff"/><rect x="50" y="356" width="1" height="3" fill="#ff00ff"/><rect x="51" y="356" width="1" height="3" fill="#ff00ff"/><rect x="51" y="354" width="1" height="2" fill="#ff00ff"/><rect x="52" y="356" width="1" height="3" fill="#ff00ff"/><rect x="53" y="356" width="1" height="3" fill="#ff00ff"/><rect x="54" y="355" width="1" height="3" fill="#ff00ff"/><rect x="54" y="352" width="1" height="3" fill="#ff00ff"/><rect x="55" y="356" width="1" height="3" fill="#ff00ff"/><rect x="55" y="353" width="1" height="3" fill="#ff00ff"/><rect x="56" y="356" width="1" height="3" fill="#ff00ff"/><rect x="57" y="356" width="1" height="3" fill="#ff00ff"/><rect x="58" y="356" width="1" height="3" fill="#ff00ff"/><rect x="59" y="356" width="1" height="3" fill="#ff00ff"/><rect x="60" y="356" width="1" height="3" fill="#ff00ff"/><rect x="61" y="356" width="1" height="3" fill="#ff00ff"/><rect x="62" y="356" width="1" height="3" fill="#ff00ff"/><rect x="63" y="356" width="1" height="3" fill="#ff00ff"/><rect x="64" y="357" width="1" height="3" fill="#ff00ff"/><rect x="64" y="354" width="1" height="3" fill="#ff00ff"/><rect x="65" y="357" width="1" height="3" fill="#ff00ff"/><rect x="66" y="357" width="1" height="3" fill="#ff00ff"/><rect x="66" y="355" width="1" height="2" fill="#ff00ff"/><rect x="67" y="357" width="1" height="3" fill="#ff00ff"/><rect x="68" y="357" width="1" height="3" fill="#ff00ff"/><rect x="69" y="356" width="1" height="3" fill="#ff00ff"/><rect x="69" y="355" width="1" height="1" fill="#ff00ff"/><rect x="70" y="356" width="1" height="3" fill="#ff00ff"/><rect x="71" y="356" width="1" height="3" fill="#ff00ff"/><rect x="72" y="356" width="1" height="3" fill="#ff00ff"/><rect x="72" y="354" width="1" height="2" fill="#ff00ff"/><rect x="73" y="356" width="1" height="3" fill="#ff00ff"/><rect x="74" y="357" width="1" height="3" fill="#ff00ff"/><rect x="75" y="357" width="1" height="3" fill="#ff00ff"/><rect x="75" y="356" width="1" height="1" fill="#ff00ff"/><rect x="76" y="357" width="1" height="3" fill="#ff00ff"/><rect x="76" y="360" width="1" height="2" fill="#ff00ff"/><rect x="77" y="357" width="1" height="3" fill="#ff00ff"/><rect x="78" y="356" width="1" height="3" fill="#ff00ff"/><rect x="79" y="356" width="1" height="3" fill="#ff00ff"/><rect x="80" y="355" width="1" height="3" fill="#ff00ff"/><rect x="80" y="352" width="1" height="3" fill="#ff00ff"/><rect x="81" y="356" width="1" height="3" fill="#ff00ff"/><rect x="81" y="354" width="1" height="2" fill="#ff00ff"/><rect x="82" y="355" width="1" height="3" fill="#ff00ff"/><rect x="83" y="355" width="1" height="3" fill="#ff00ff"/><rect x="84" y="356" width="1" height="3" fill="#ff00ff"/><rect x="85" y="356" width="1" height="3" fill="#ff00ff"/><rect x="85" y="353" width="1" height="3" fill="#ff00ff"/><rect x="86" y="357" width="1" height="3" fill="#ff00ff"/><rect x="86" y="356" width="1" height="1" fill="#ff00ff"/><rect x="87" y="357" width="1" height="3" fill="#ff00ff"/><rect x="88" y="357" width="1" height="3" fill="#ff00ff"/><rect x="89" y="357" width="1" height="3" fill="#ff00ff"/><rect x="90" y="357" width="1" height="3" fill="#ff00ff"/><rect x="90" y="355" width="1" height="2" fill="#ff00ff"/><rect x="91" y="357" width="1" height="3" fill="#ff00ff"/><rect x="91" y="360" width="1" height="2" fill="#ff00ff"/><rect x="92" y="357" width="1" height="3" fill="#ff00ff"/><rect x="93" y="357" width="1" height="3" fill="#ff00ff"/><rect x="94" y="357" width="1" height="3" fill="#ff00ff"/><rect x="95" y="357" width="1" height="3" fill="#ff00ff"/><rect x="95" y="355" width="1" height="2" fill="#ff00ff"/><rect x="96" y="357" width="1" height="3" fill="#ff00ff"/><rect x="97" y="357" width="1" height="3" fill="#ff00ff"/><rect x="98" y="356" width="1" height="3" fill="#ff00ff"/><rect x="99" y="355" width="1" height="3" fill="#ff00ff"/><rect x="99" y="353" width="1" height="2" fill="#ff00ff"/><rect x="100" y="355" width="1" height="3" fill="#ff00ff"/><rect x="101" y="356" width="1" height="3" fill="#ff00ff"/><rect x="101" y="359" width="1" height="2" fill="#ff00ff"/><rect x="102" y="355" width="1" height="3" fill="#ff00ff"/><rect x="102" y="358" width="1" height="2" fill="#ff00ff"/><rect x="103" y="355" width="1" height="3" fill="#ff00ff"/><rect x="103" y="358" width="1" height="2" fill="#ff00ff"/><rect x="104" y="356" width="1" height="3" fill="#ff00ff"/><rect x="105" y="356" width="1" height="3" fill="#ff00ff"/><rect x="105" y="353" width="1" height="3" fill="#ff00ff"/><rect x="106" y="355" width="1" height="3" fill="#ff00ff"/><rect x="107" y="355" width="1" height="3" fill="#ff00ff"/><rect x="108" y="356" width="1" height="3" fill="#ff00ff"/><rect x="108" y="359" width="1" height="2" fill="#ff00ff"/><rect x="109" y="355" width="1" height="3" fill="#ff00ff"/><rect x="109" y="352" width="1" height="3" fill="#ff00ff"/><rect x="110" y="356" width="1" height="3" fill="#ff00ff"/><rect x="111" y="357" width="1" height="3" fill="#ff00ff"/><rect x="112" y="357" width="1" height="3" fill="#ff00ff"/><rect x="113" y="357" width="1" height="3" fill="#ff00ff"/><rect x="114" y="357" width="1" height="3" fill="#ff00ff"/><rect x="114" y="360" width="1" height="1" fill="#ff00ff"/><rect x="115" y="357" width="1" height="3" fill="#ff00ff"/><rect x="116" y="357" width="1" height="3" fill="#ff00ff"/><rect x="117" y="356" width="1" height="3" fill="#ff00ff"/><rect x="118" y="357" width="1" height="3" fill="#ff00ff"/><rect x="118" y="360" width="1" height="2" fill="#ff00ff"/><rect x="119" y="357" width="1" height="3" fill="#ff00ff"/><rect x="119" y="360" width="1" height="2" fill="#ff00ff"/><rect x="120" y="357" width="1" height="3" fill="#ff00ff"/><rect x="121" y="357" width="1" height="3" fill="#ff00ff"/><rect x="121" y="356" width="1" height="1" fill="#ff00ff"/><rect x="122" y="357" width="1" height="3" fill="#ff00ff"/><rect x="123" y="357" width="1" height="3" fill="#ff00ff"/><rect x="124" y="357" width="1" height="3" fill="#ff00ff"/><rect x="125" y="356" width="1" height="3" fill="#ff00ff"/><rect x="126" y="356" width="1" height="3" fill="#ff00ff"/><rect x="127" y="356" width="1" height="3" fill="#ff00ff"/><rect x="128" y="355" width="1" height="3" fill="#ff00ff"/><rect x="129" y="355" width="1" height="3" fill="#ff00ff"/><rect x="129" y="358" width="1" height="2" fill="#ff00ff"/><rect x="130" y="355" width="1" height="3" fill="#ff00ff"/><rect x="131" y="355" width="1" height="3" fill="#ff00ff"/><rect x="132" y="355" width="1" height="3" fill="#ff00ff"/><rect x="132" y="358" width="1" height="2" fill="#ff00ff"/><rect x="133" y="356" width="1" height="3" fill="#ff00ff"/><rect x="133" y="355" width="1" height="1" fill="#ff00ff"/><rect x="134" y="356" width="1" height="3" fill="#ff00ff"/><rect x="134" y="359" width="1" height="2" fill="#ff00ff"/><rect x="135" y="356" width="1" height="3" fill="#ff00ff"/><rect x="136" y="355" width="1" height="3" fill="#ff00ff"/><rect x="136" y="352" width="1" height="3" fill="#ff00ff"/><rect x="137" y="355" width="1" height="3" fill="#ff00ff"/><rect x="137" y="358" width="1" height="1" fill="#ff00ff"/><rect x="138" y="355" width="1" height="3" fill="#ff00ff"/><rect x="138" y="354" width="1" height="1" fill="#ff00ff"/><rect x="139" y="355" width="1" height="3" fill="#ff00ff"/><rect x="140" y="355" width="1" height="3" fill="#ff00ff"/><rect x="141" y="355" width="1" height="3" fill="#ff00ff"/><rect x="142" y="355" width="1" height="3" fill="#ff00ff"/><rect x="143" y="355" width="1" height="3" fill="#ff00ff"/><rect x="144" y="355" width="1" height="3" fill="#ff00ff"/><rect x="145" y="355" width="1" height="3" fill="#ff00ff"/><rect x="145" y="358" width="1" height="1" fill="#ff00ff"/><rect x="146" y="355" width="1" height="3" fill="#ff00ff"/><rect x="146" y="353" width="1" height="2" fill="#ff00ff"/><rect x="147" y="355" width="1" height="3" fill="#ff00ff"/><rect x="148" y="355" width="1" height="3" fill="#ff00ff"/><rect x="149" y="355" width="1" height="3" fill="#ff00ff"/><rect x="150" y="356" width="1" height="3" fill="#ff00ff"/><rect x="151" y="356" width="1" height="3" fill="#ff00ff"/><rect x="152" y="356" width="1" height="3" fill="#ff00ff"/><rect x="153" y="356" width="1" height="3" fill="#ff00ff"/><rect x="154" y="356" width="1" height="3" fill="#ff00ff"/><rect x="155" y="355" width="1" height="3" fill="#ff00ff"/><rect x="156" y="355" width="1" height="3" fill="#ff00ff"/><rect x="157" y="355" width="1" height="3" fill="#ff00ff"/><rect x="157" y="358" width="1" height="2" fill="#ff00ff"/><rect x="158" y="356" width="1" height="3" fill="#ff00ff"/><rect x="158" y="354" width="1" height="2" fill="#ff00ff"/><rect x="159" y="357" width="1" height="3" fill="#ff00ff"/><rect x="160" y="357" width="1" height="3" fill="#ff00ff"/><rect x="161" y="357" width="1" height="3" fill="#ff00ff"/><rect x="162" y="357" width="1" height="3" fill="#ff00ff"/><rect x="162" y="355" width="1" height="2" fill="#ff00ff"/><rect x="163" y="357" width="1" height="3" fill="#ff00ff"/><rect x="164" y="357" width="1" height="3" fill="#ff00ff"/><rect x="165" y="357" width="1" height="3" fill="#ff00ff"/><rect x="166" y="357" width="1" height="3" fill="#ff00ff"/><rect x="167" y="357" width="1" height="3" fill="#ff00ff"/><rect x="168" y="357" width="1" height="3" fill="#ff00ff"/><rect x="169" y="357" width="1" height="3" fill="#ff00ff"/><rect x="170" y="357" width="1" height="3" fill="#ff00ff"/><rect x="171" y="357" width="1" height="3" fill="#ff00ff"/><rect x="172" y="357" width="1" height="3" fill="#ff00ff"/><rect x="172" y="356" width="1" height="1" fill="#ff00ff"/><rect x="173" y="357" width="1" height="3" fill="#ff00ff"/><rect x="174" y="357" width="1" height="3" fill="#ff00ff"/><rect x="175" y="357" width="1" height="3" fill="#ff00ff"/><rect x="176" y="356" width="1" height="3" fill="#ff00ff"/><rect x="177" y="357" width="1" height="3" fill="#ff00ff"/><rect x="178" y="356" width="1" height="3" fill="#ff00ff"/><rect x="179" y="357" width="1" height="3" fill="#ff00ff"/><rect x="180" y="357" width="1" height="3" fill="#ff00ff"/><rect x="181" y="357" width="1" height="3" fill="#ff00ff"/><rect x="181" y="356" width="1" height="1" fill="#ff00ff"/><rect x="182" y="357" width="1" height="3" fill="#ff00ff"/><rect x="183" y="357" width="1" height="3" fill="#ff00ff"/><rect x="184" y="357" width="1" height="3" fill="#ff00ff"/><rect x="184" y="360" width="1" height="2" fill="#ff00ff"/><rect x="185" y="357" width="1" height="3" fill="#ff00ff"/><rect x="186" y="357" width="1" height="3" fill="#ff00ff"/><rect x="186" y="360" width="1" height="2" fill="#ff00ff"/><rect x="187" y="356" width="1" height="3" fill="#ff00ff"/><rect x="187" y="359" width="1" height="2" fill="#ff00ff"/><rect x="188" y="356" width="1" height="3" fill="#ff00ff"/><rect x="188" y="354" width="1" height="2" fill="#ff00ff"/><rect x="189" y="355" width="1" height="3" fill="#ff00ff"/><rect x="190" y="355" width="1" height="3" fill="#ff00ff"/><rect x="191" y="355" width="1" height="3" fill="#ff00ff"/><rect x="192" y="355" width="1" height="3" fill="#ff00ff"/><rect x="193" y="355" width="1" height="3" fill="#ff00ff"/><rect x="194" y="355" width="1" height="3" fill="#ff00ff"/><rect x="195" y="355" width="1" height="3" fill="#ff00ff"/><rect x="196" y="356" width="1" height="3" fill="#ff00ff"/><rect x="197" y="355" width="1" height="3" fill="#ff00ff"/><rect x="198" y="355" width="1" height="3" fill="#ff00ff"/><rect x="199" y="355" width="1" height="3" fill="#ff00ff"/><rect x="200" y="355" width="1" height="3" fill="#ff00ff"/><rect x="200" y="353" width="1" height="2" fill="#ff00ff"/><rect x="201" y="356" width="1" height="3" fill="#ff00ff"/><rect x="201" y="354" width="1" height="2" fill="#ff00ff"/><rect x="202" y="356" width="1" height="3" fill="#ff00ff"/><rect x="203" y="355" width="1" height="3" fill="#ff00ff"/><rect x="204" y="356" width="1" height="3" fill="#ff00ff"/><rect x="205" y="357" width="1" height="3" fill="#ff00ff"/><rect x="206" y="356" width="1" height="3" fill="#ff00ff"/><rect x="206" y="355" width="1" height="1" fill="#ff00ff"/><rect x="207" y="356" width="1" height="3" fill="#ff00ff"/><rect x="208" y="357" width="1" height="3" fill="#ff00ff"/><rect x="208" y="354" width="1" height="3" fill="#ff00ff"/><rect x="209" y="356" width="1" height="3" fill="#ff00ff"/><rect x="210" y="356" width="1" height="3" fill="#ff00ff"/><rect x="211" y="355" width="1" height="3" fill="#ff00ff"/><rect x="212" y="355" width="1" height="3" fill="#ff00ff"/><rect x="212" y="358" width="1" height="1" fill="#ff00ff"/><rect x="213" y="355" width="1" height="3" fill="#ff00ff"/><rect x="213" y="354" width="1" height="1" fill="#ff00ff"/><rect x="214" y="356" width="1" height="3" fill="#ff00ff"/><rect x="215" y="356" width="1" height="3" fill="#ff00ff"/><rect x="216" y="356" width="1" height="3" fill="#ff00ff"/><rect x="217" y="356" width="1" height="3" fill="#ff00ff"/><rect x="218" y="355" width="1" height="3" fill="#ff00ff"/><rect x="219" y="355" width="1" height="3" fill="#ff00ff"/><rect x="219" y="352" width="1" height="3" fill="#ff00ff"/><rect x="220" y="355" width="1" height="3" fill="#ff00ff"/><rect x="220" y="352" width="1" height="3" fill="#ff00ff"/><rect x="221" y="355" width="1" height="3" fill="#ff00ff"/><rect x="222" y="355" width="1" height="3" fill="#ff00ff"/><rect x="223" y="355" width="1" height="3" fill="#ff00ff"/><rect x="224" y="356" width="1" height="3" fill="#ff00ff"/><rect x="225" y="356" width="1" height="3" fill="#ff00ff"/><rect x="226" y="356" width="1" height="3" fill="#ff00ff"/><rect x="226" y="359" width="1" height="2" fill="#ff00ff"/><rect x="227" y="355" width="1" height="3" fill="#ff00ff"/><rect x="228" y="355" width="1" height="3" fill="#ff00ff"/><rect x="228" y="353" width="1" height="2" fill="#ff00ff"/><rect x="229" y="355" width="1" height="3" fill="#ff00ff"/><rect x="230" y="356" width="1" height="3" fill="#ff00ff"/><rect x="231" y="356" width="1" height="3" fill="#ff00ff"/><rect x="232" y="356" width="1" height="3" fill="#ff00ff"/><rect x="232" y="359" width="1" height="1" fill="#ff00ff"/><rect x="233" y="357" width="1" height="3" fill="#ff00ff"/><rect x="234" y="357" width="1" height="3" fill="#ff00ff"/><rect x="234" y="360" width="1" height="2" fill="#ff00ff"/><rect x="235" y="357" width="1" height="3" fill="#ff00ff"/><rect x="236" y="356" width="1" height="3" fill="#ff00ff"/><rect x="237" y="357" width="1" height="3" fill="#ff00ff"/><rect x="238" y="356" width="1" height="3" fill="#ff00ff"/><rect x="238" y="355" width="1" height="1" fill="#ff00ff"/><rect x="239" y="355" width="1" height="3" fill="#ff00ff"/><rect x="239" y="353" width="1" height="2" fill="#ff00ff"/><rect x="240" y="355" width="1" height="3" fill="#ff00ff"/><rect x="240" y="353" width="1" height="2" fill="#ff00ff"/><rect x="241" y="356" width="1" height="3" fill="#ff00ff"/><rect x="242" y="356" width="1" height="3" fill="#ff00ff"/><rect x="243" y="356" width="1" height="3" fill="#ff00ff"/><rect x="244" y="357" width="1" height="3" fill="#ff00ff"/><rect x="245" y="357" width="1" height="3" fill="#ff00ff"/><rect x="246" y="357" width="1" height="3" fill="#ff00ff"/><rect x="247" y="357" width="1" height="3" fill="#ff00ff"/><rect x="248" y="357" width="1" height="3" fill="#ff00ff"/><rect x="249" y="356" width="1" height="3" fill="#ff00ff"/><rect x="250" y="357" width="1" height="3" fill="#ff00ff"/><rect x="251" y="356" width="1" height="3" fill="#ff00ff"/><rect x="252" y="355" width="1" height="3" fill="#ff00ff"/><rect x="252" y="358" width="1" height="1" fill="#ff00ff"/><rect x="253" y="355" width="1" height="3" fill="#ff00ff"/><rect x="254" y="355" width="1" height="3" fill="#ff00ff"/><rect x="255" y="355" width="1" height="3" fill="#ff00ff"/><rect x="256" y="355" width="1" height="3" fill="#ff00ff"/><rect x="257" y="355" width="1" height="3" fill="#ff00ff"/><rect x="257" y="358" width="1" height="1" fill="#ff00ff"/><rect x="258" y="355" width="1" height="3" fill="#ff00ff"/><rect x="259" y="355" width="1" height="3" fill="#ff00ff"/><rect x="260" y="355" width="1" height="3" fill="#ff00ff"/><rect x="261" y="356" width="1" height="3" fill="#ff00ff"/><rect x="261" y="359" width="1" height="2" fill="#ff00ff"/><rect x="262" y="356" width="1" height="3" fill="#ff00ff"/><rect x="263" y="355" width="1" height="3" fill="#ff00ff"/><rect x="264" y="355" width="1" height="3" fill="#ff00ff"/><rect x="265" y="355" width="1" height="3" fill="#ff00ff"/><rect x="265" y="353" width="1" height="2" fill="#ff00ff"/><rect x="266" y="355" width="1" height="3" fill="#ff00ff"/><rect x="266" y="352" width="1" height="3" fill="#ff00ff"/><rect x="267" y="355" width="1" height="3" fill="#ff00ff"/><rect x="268" y="355" width="1" height="3" fill="#ff00ff"/><rect x="268" y="353" width="1" height="2" fill="#ff00ff"/><rect x="269" y="355" width="1" height="3" fill="#ff00ff"/><rect x="269" y="358" width="1" height="2" fill="#ff00ff"/><rect x="270" y="356" width="1" height="3" fill="#ff00ff"/><rect x="271" y="356" width="1" height="3" fill="#ff00ff"/><rect x="272" y="357" width="1" height="3" fill="#ff00ff"/><rect x="273" y="357" width="1" height="3" fill="#ff00ff"/><rect x="274" y="356" width="1" height="3" fill="#ff00ff"/><rect x="275" y="356" width="1" height="3" fill="#ff00ff"/><rect x="276" y="355" width="1" height="3" fill="#ff00ff"/><rect x="277" y="356" width="1" height="3" fill="#ff00ff"/><rect x="278" y="355" width="1" height="3" fill="#ff00ff"/><rect x="278" y="354" width="1" height="1" fill="#ff00ff"/><rect x="279" y="355" width="1" height="3" fill="#ff00ff"/><rect x="280" y="356" width="1" height="3" fill="#ff00ff"/><rect x="281" y="356" width="1" height="3" fill="#ff00ff"/><rect x="282" y="356" width="1" height="3" fill="#ff00ff"/><rect x="283" y="356" width="1" height="3" fill="#ff00ff"/><rect x="284" y="356" width="1" height="3" fill="#ff00ff"/><rect x="284" y="353" width="1" height="3" fill="#ff00ff"/><rect x="285" y="355" width="1" height="3" fill="#ff00ff"/><rect x="286" y="355" width="1" height="3" fill="#ff00ff"/><rect x="287" y="356" width="1" height="3" fill="#ff00ff"/><rect x="287" y="353" width="1" height="3" fill="#ff00ff"/><rect x="288" y="357" width="1" height="3" fill="#ff00ff"/><rect x="289" y="356" width="1" height="3" fill="#ff00ff"/><rect x="290" y="357" width="1" height="3" fill="#ff00ff"/><rect x="291" y="357" width="1" height="3" fill="#ff00ff"/><rect x="291" y="355" width="1" height="2" fill="#ff00ff"/><rect x="292" y="357" width="1" height="3" fill="#ff00ff"/><rect x="292" y="360" width="1" height="1" fill="#ff00ff"/><rect x="293" y="357" width="1" height="3" fill="#ff00ff"/><rect x="293" y="360" width="1" height="2" fill="#ff00ff"/><rect x="294" y="357" width="1" height="3" fill="#ff00ff"/><rect x="295" y="357" width="1" height="3" fill="#ff00ff"/><rect x="295" y="355" width="1" height="2" fill="#ff00ff"/><rect x="296" y="357" width="1" height="3" fill="#ff00ff"/><rect x="296" y="356" width="1" height="1" fill="#ff00ff"/><rect x="297" y="357" width="1" height="3" fill="#ff00ff"/><rect x="297" y="356" width="1" height="1" fill="#ff00ff"/><rect x="298" y="356" width="1" height="3" fill="#ff00ff"/><rect x="298" y="355" width="1" height="1" fill="#ff00ff"/><rect x="299" y="355" width="1" height="3" fill="#ff00ff"/><rect x="300" y="355" width="1" height="3" fill="#ff00ff"/><rect x="301" y="355" width="1" height="3" fill="#ff00ff"/><rect x="302" y="355" width="1" height="3" fill="#ff00ff"/><rect x="302" y="358" width="1" height="1" fill="#ff00ff"/><rect x="303" y="355" width="1" height="3" fill="#ff00ff"/><rect x="303" y="353" width="1" height="2" fill="#ff00ff"/><rect x="304" y="355" width="1" height="3" fill="#ff00ff"/><rect x="304" y="353" width="1" height="2" fill="#ff00ff"/><rect x="305" y="355" width="1" height="3" fill="#ff00ff"/><rect x="306" y="356" width="1" height="3" fill="#ff00ff"/><rect x="307" y="357" width="1" height="3" fill="#ff00ff"/><rect x="308" y="356" width="1" height="3" fill="#ff00ff"/><rect x="309" y="356" width="1" height="3" fill="#ff00ff"/><rect x="309" y="353" width="1" height="3" fill="#ff00ff"/><rect x="310" y="355" width="1" height="3" fill="#ff00ff"/><rect x="311" y="355" width="1" height="3" fill="#ff00ff"/><rect x="311" y="358" width="1" height="2" fill="#ff00ff"/><rect x="312" y="355" width="1" height="3" fill="#ff00ff"/><rect x="312" y="358" width="1" height="2" fill="#ff00ff"/><rect x="313" y="355" width="1" height="3" fill="#ff00ff"/><rect x="314" y="355" width="1" height="3" fill="#ff00ff"/><rect x="314" y="358" width="1" height="2" fill="#ff00ff"/><rect x="315" y="355" width="1" height="3" fill="#ff00ff"/><rect x="316" y="355" width="1" height="3" fill="#ff00ff"/><rect x="316" y="358" width="1" height="1" fill="#ff00ff"/><rect x="317" y="356" width="1" height="3" fill="#ff00ff"/><rect x="317" y="359" width="1" height="1" fill="#ff00ff"/><rect x="318" y="355" width="1" height="3" fill="#ff00ff"/><rect x="318" y="353" width="1" height="2" fill="#ff00ff"/><rect x="319" y="356" width="1" height="3" fill="#ff00ff"/><rect x="320" y="357" width="1" height="3" fill="#ff00ff"/><rect x="321" y="357" width="1" height="3" fill="#ff00ff"/><rect x="322" y="357" width="1" height="3" fill="#ff00ff"/><rect x="322" y="360" width="1" height="2" fill="#ff00ff"/><rect x="323" y="356" width="1" height="3" fill="#ff00ff"/><rect x="324" y="357" width="1" height="3" fill="#ff00ff"/><rect x="325" y="356" width="1" height="3" fill="#ff00ff"/><rect x="326" y="355" width="1" height="3" fill="#ff00ff"/><rect x="327" y="355" width="1" height="3" fill="#ff00ff"/><rect x="328" y="355" width="1" height="3" fill="#ff00ff"/><rect x="328" y="353" width="1" height="2" fill="#ff00ff"/><rect x="329" y="356" width="1" height="3" fill="#ff00ff"/><rect x="329" y="354" width="1" height="2" fill="#ff00ff"/><rect x="330" y="356" width="1" height="3" fill="#ff00ff"/><rect x="330" y="359" width="1" height="1" fill="#ff00ff"/><rect x="331" y="356" width="1" height="3" fill="#ff00ff"/><rect x="332" y="356" width="1" height="3" fill="#ff00ff"/><rect x="333" y="356" width="1" height="3" fill="#ff00ff"/><rect x="334" y="357" width="1" height="3" fill="#ff00ff"/><rect x="334" y="354" width="1" height="3" fill="#ff00ff"/><rect x="335" y="356" width="1" height="3" fill="#ff00ff"/><rect x="335" y="353" width="1" height="3" fill="#ff00ff"/><rect x="336" y="356" width="1" height="3" fill="#ff00ff"/><rect x="337" y="356" width="1" height="3" fill="#ff00ff"/><rect x="337" y="355" width="1" height="1" fill="#ff00ff"/><rect x="338" y="357" width="1" height="3" fill="#ff00ff"/><rect x="338" y="354" width="1" height="3" fill="#ff00ff"/><rect x="339" y="357" width="1" height="3" fill="#ff00ff"/><rect x="339" y="354" width="1" height="3" fill="#ff00ff"/><rect x="340" y="357" width="1" height="3" fill="#ff00ff"/><rect x="341" y="357" width="1" height="3" fill="#ff00ff"/><rect x="341" y="360" width="1" height="1" fill="#ff00ff"/><rect x="342" y="357" width="1" height="3" fill="#ff00ff"/><rect x="343" y="357" width="1" height="3" fill="#ff00ff"/><rect x="343" y="360" width="1" height="1" fill="#ff00ff"/><rect x="344" y="356" width="1" height="3" fill="#ff00ff"/><rect x="345" y="357" width="1" height="3" fill="#ff00ff"/><rect x="345" y="360" width="1" height="2" fill="#ff00ff"/><rect x="346" y="357" width="1" height="3" fill="#ff00ff"/><rect x="346" y="360" width="1" height="1" fill="#ff00ff"/><rect x="347" y="356" width="1" height="3" fill="#ff00ff"/><rect x="348" y="355" width="1" height="3" fill="#ff00ff"/><rect x="349" y="355" width="1" height="3" fill="#ff00ff"/><rect x="349" y="354" width="1" height="1" fill="#ff00ff"/><rect x="350" y="355" width="1" height="3" fill="#ff00ff"/><rect x="350" y="354" width="1" height="1" fill="#ff00ff"/><rect x="351" y="355" width="1" height="3" fill="#ff00ff"/><rect x="351" y="358" width="1" height="2" fill="#ff00ff"/><rect x="352" y="355" width="1" height="3" fill="#ff00ff"/><rect x="352" y="358" width="1" height="2" fill="#ff00ff"/><rect x="353" y="355" width="1" height="3" fill="#ff00ff"/><rect x="354" y="356" width="1" height="3" fill="#ff00ff"/><rect x="354" y="354" width="1" height="2" fill="#ff00ff"/><rect x="355" y="356" width="1" height="3" fill="#ff00ff"/><rect x="355" y="353" width="1" height="3" fill="#ff00ff"/><rect x="356" y="356" width="1" height="3" fill="#ff00ff"/><rect x="356" y="353" width="1" height="3" fill="#ff00ff"/><rect x="357" y="356" width="1" height="3" fill="#ff00ff"/><rect x="358" y="356" width="1" height="3" fill="#ff00ff"/><rect x="359" y="357" width="1" height="3" fill="#ff00ff"/><rect x="360" y="357" width="1" height="3" fill="#ff00ff"/><rect x="361" y="357" width="1" height="3" fill="#ff00ff"/><rect x="361" y="360" width="1" height="1" fill="#ff00ff"/><rect x="362" y="357" width="1" height="3" fill="#ff00ff"/><rect x="362" y="356" width="1" height="1" fill="#ff00ff"/><rect x="363" y="356" width="1" height="3" fill="#ff00ff"/><rect x="364" y="355" width="1" height="3" fill="#ff00ff"/><rect x="364" y="353" width="1" height="2" fill="#ff00ff"/><rect x="365" y="355" width="1" height="3" fill="#ff00ff"/><rect x="366" y="355" width="1" height="3" fill="#ff00ff"/><rect x="367" y="355" width="1" height="3" fill="#ff00ff"/><rect x="368" y="355" width="1" height="3" fill="#ff00ff"/><rect x="369" y="355" width="1" height="3" fill="#ff00ff"/><rect x="370" y="355" width="1" height="3" fill="#ff00ff"/><rect x="371" y="355" width="1" height="3" fill="#ff00ff"/><rect x="372" y="355" width="1" height="3" fill="#ff00ff"/><rect x="373" y="355" width="1" height="3" fill="#ff00ff"/><rect x="373" y="352" width="1" height="3" fill="#ff00ff"/><rect x="374" y="355" width="1" height="3" fill="#ff00ff"/><rect x="375" y="355" width="1" height="3" fill="#ff00ff"/><rect x="376" y="356" width="1" height="3" fill="#ff00ff"/><rect x="377" y="355" width="1" height="3" fill="#ff00ff"/><rect x="378" y="355" width="1" height="3" fill="#ff00ff"/><rect x="379" y="355" width="1" height="3" fill="#ff00ff"/><rect x="380" y="355" width="1" height="3" fill="#ff00ff"/><rect x="380" y="358" width="1" height="1" fill="#ff00ff"/><rect x="381" y="355" width="1" height="3" fill="#ff00ff"/><rect x="382" y="355" width="1" height="3" fill="#ff00ff"/><rect x="383" y="355" width="1" height="3" fill="#ff00ff"/><rect x="384" y="355" width="1" height="3" fill="#ff00ff"/><rect x="385" y="356" width="1" height="3" fill="#ff00ff"/><rect x="386" y="355" width="1" height="3" fill="#ff00ff"/><rect x="387" y="356" width="1" height="3" fill="#ff00ff"/><rect x="388" y="355" width="1" height="3" fill="#ff00ff"/><rect x="388" y="352" width="1" height="3" fill="#ff00ff"/><rect x="389" y="355" width="1" height="3" fill="#ff00ff"/><rect x="390" y="355" width="1" height="3" fill="#ff00ff"/><rect x="391" y="355" width="1" height="3" fill="#ff00ff"/><rect x="392" y="355" width="1" height="3" fill="#ff00ff"/><rect x="392" y="358" width="1" height="2" fill="#ff00ff"/><rect x="393" y="355" width="1" height="3" fill="#ff00ff"/><rect x="394" y="355" width="1" height="3" fill="#ff00ff"/><rect x="395" y="355" width="1" height="3" fill="#ff00ff"/><rect x="396" y="355" width="1" height="3" fill="#ff00ff"/><rect x="396" y="353" width="1" height="2" fill="#ff00ff"/><rect x="397" y="355" width="1" height="3" fill="#ff00ff"/><rect x="397" y="353" width="1" height="2" fill="#ff00ff"/><rect x="398" y="355" width="1" height="3" fill="#ff00ff"/><rect x="399" y="355" width="1" height="3" fill="#ff00ff"/><rect x="399" y="358" width="1" height="2" fill="#ff00ff"/><rect x="400" y="355" width="1" height="3" fill="#ff00ff"/><rect x="401" y="355" width="1" height="3" fill="#ff00ff"/><rect x="401" y="354" width="1" height="1" fill="#ff00ff"/><rect x="402" y="356" width="1" height="3" fill="#ff00ff"/><rect x="403" y="356" width="1" height="3" fill="#ff00ff"/><rect x="404" y="357" width="1" height="3" fill="#ff00ff"/><rect x="405" y="357" width="1" height="3" fill="#ff00ff"/><rect x="406" y="357" width="1" height="3" fill="#ff00ff"/><rect x="407" y="357" width="1" height="3" fill="#ff00ff"/><rect x="407" y="360" width="1" height="1" fill="#ff00ff"/><rect x="408" y="355" width="1" height="3" fill="#ff00ff"/><rect x="409" y="354" width="1" height="3" fill="#ff00ff"/><rect x="410" y="355" width="1" height="3" fill="#ff00ff"/><rect x="410" y="358" width="1" height="1" fill="#ff00ff"/><rect x="411" y="355" width="1" height="3" fill="#ff00ff"/><rect x="411" y="354" width="1" height="1" fill="#ff00ff"/><rect x="412" y="355" width="1" height="3" fill="#ff00ff"/><rect x="413" y="355" width="1" height="3" fill="#ff00ff"/><rect x="414" y="354" width="1" height="3" fill="#ff00ff"/><rect x="414" y="351" width="1" height="3" fill="#ff00ff"/><rect x="415" y="354" width="1" height="3" fill="#ff00ff"/><rect x="416" y="354" width="1" height="3" fill="#ff00ff"/><rect x="417" y="354" width="1" height="3" fill="#ff00ff"/><rect x="418" y="354" width="1" height="3" fill="#ff00ff"/><rect x="419" y="355" width="1" height="3" fill="#ff00ff"/><rect x="420" y="354" width="1" height="3" fill="#ff00ff"/><rect x="420" y="351" width="1" height="3" fill="#ff00ff"/><rect x="421" y="355" width="1" height="3" fill="#ff00ff"/><rect x="421" y="354" width="1" height="1" fill="#ff00ff"/><rect x="422" y="356" width="1" height="3" fill="#ff00ff"/><rect x="422" y="359" width="1" height="2" fill="#ff00ff"/><rect x="423" y="356" width="1" height="3" fill="#ff00ff"/><rect x="424" y="356" width="1" height="3" fill="#ff00ff"/><rect x="424" y="355" width="1" height="1" fill="#ff00ff"/><rect x="425" y="356" width="1" height="3" fill="#ff00ff"/><rect x="425" y="359" width="1" height="1" fill="#ff00ff"/><rect x="426" y="356" width="1" height="3" fill="#ff00ff"/><rect x="427" y="356" width="1" height="3" fill="#ff00ff"/><rect x="428" y="356" width="1" height="3" fill="#ff00ff"/><rect x="428" y="354" width="1" height="2" fill="#ff00ff"/><rect x="429" y="356" width="1" height="3" fill="#ff00ff"/><rect x="429" y="355" width="1" height="1" fill="#ff00ff"/><rect x="430" y="356" width="1" height="3" fill="#ff00ff"/><rect x="430" y="359" width="1" height="2" fill="#ff00ff"/><rect x="431" y="356" width="1" height="3" fill="#ff00ff"/><rect x="432" y="356" width="1" height="3" fill="#ff00ff"/><rect x="433" y="356" width="1" height="3" fill="#ff00ff"/><rect x="434" y="355" width="1" height="3" fill="#ff00ff"/><rect x="434" y="358" width="1" height="1" fill="#ff00ff"/><rect x="435" y="355" width="1" height="3" fill="#ff00ff"/><rect x="435" y="358" width="1" height="2" fill="#ff00ff"/><rect x="436" y="355" width="1" height="3" fill="#ff00ff"/><rect x="436" y="358" width="1" height="1" fill="#ff00ff"/><rect x="437" y="355" width="1" height="3" fill="#ff00ff"/><rect x="437" y="358" width="1" height="2" fill="#ff00ff"/><rect x="438" y="353" width="1" height="3" fill="#ff00ff"/><rect x="439" y="353" width="1" height="3" fill="#ff00ff"/><rect x="440" y="353" width="1" height="3" fill="#ff00ff"/><rect x="441" y="353" width="1" height="3" fill="#ff00ff"/><rect x="441" y="350" width="1" height="3" fill="#ff00ff"/><rect x="442" y="353" width="1" height="3" fill="#ff00ff"/><rect x="442" y="352" width="1" height="1" fill="#ff00ff"/><rect x="443" y="353" width="1" height="3" fill="#ff00ff"/><rect x="444" y="353" width="1" height="3" fill="#ff00ff"/><rect x="444" y="356" width="1" height="2" fill="#ff00ff"/><rect x="445" y="353" width="1" height="3" fill="#ff00ff"/><rect x="446" y="353" width="1" height="3" fill="#ff00ff"/><rect x="446" y="356" width="1" height="2" fill="#ff00ff"/><rect x="447" y="354" width="1" height="3" fill="#ff00ff"/><rect x="447" y="357" width="1" height="2" fill="#ff00ff"/><rect x="448" y="353" width="1" height="3" fill="#ff00ff"/><rect x="448" y="356" width="1" height="1" fill="#ff00ff"/><rect x="449" y="353" width="1" height="3" fill="#ff00ff"/><rect x="450" y="353" width="1" height="3" fill="#ff00ff"/><rect x="450" y="350" width="1" height="3" fill="#ff00ff"/><rect x="451" y="353" width="1" height="3" fill="#ff00ff"/><rect x="451" y="351" width="1" height="2" fill="#ff00ff"/><rect x="452" y="353" width="1" height="3" fill="#ff00ff"/><rect x="452" y="351" width="1" height="2" fill="#ff00ff"/><rect x="48" y="356" width="1" height="14" fill="#ff00ff"/><rect x="159" y="347" width="1" height="9" fill="#ff00ff"/><rect x="160" y="350" width="1" height="6" fill="#ff00ff"/><rect x="391" y="348" width="1" height="8" fill="#ff00ff"/><rect x="392" y="351" width="1" height="5" fill="#ff00ff"/><rect x="453" y="295" width="1" height="134" fill="#c8c8c8"/><rect x="48" y="389" width="1" height="40" fill="#1eff00"/><rect x="49" y="415" width="1" height="14" fill="#1eff00"/><rect x="50" y="349" width="1" height="80" fill="#1eff00"/><rect x="51" y="415" width="1" height="14" fill="#1eff00"/><rect x="55" y="362" width="1" height="67" fill="#1eff00"/><rect x="56" y="389" width="1" height="40" fill="#1eff00"/><rect x="60" y="415" width="1" height="14" fill="#1eff00"/><rect x="62" y="415" width="1" height="14" fill="#1eff00"/><rect x="63" y="415" width="1" height="14" fill="#1eff00"/><rect x="65" y="415" width="1" height="14" fill="#1eff00"/><rect x="67" y="415" width="1" height="14" fill="#1eff00"/><rect x="68" y="415" width="1" height="14" fill="#1eff00"/><rect x="69" y="415" width="1" height="14" fill="#1eff00"/><rect x="73" y="402" width="1" height="27" fill="#1eff00"/><rect x="74" y="415" width="1" height="14" fill="#1eff00"/><rect x="76" y="402" width="1" height="27" fill="#1eff00"/><rect x="78" y="375" width="1" height="54" fill="#1eff00"/><rect x="79" y="402" width="1" height="27" fill="#1eff00"/><rect x="80" y="389" width="1" height="40" fill="#1eff00"/><rect x="81" y="402" width="1" height="27" fill="#1eff00"/><rect x="82" y="375" width="1" height="54" fill="#1eff00"/><rect x="83" y="402" width="1" height="27" fill="#1eff00"/><rect x="85" y="402" width="1" height="27" fill="#1eff00"/><rect x="86" y="349" width="1" height="80" fill="#1eff00"/><rect x="87" y="375" width="1" height="54" fill="#1eff00"/><rect x="88" y="402" width="1" height="27" fill="#1eff00"/><rect x="89" y="349" width="1" height="80" fill="#1eff00"/><rect x="90" y="349" width="1" height="80" fill="#1eff00"/><rect x="91" y="402" width="1" height="27" fill="#1eff00"/><rect x="92" y="375" width="1" height="54" fill="#1eff00"/><rect x="93" y="415" width="1" height="14" fill="#1eff00"/><rect x="94" y="362" width="1" height="67" fill="#1eff00"/><rect x="95" y="415" width="1" height="14" fill="#1eff00"/><rect x="97" y="389" width="1" height="40" fill="#1eff00"/><rect x="98" y="402" width="1" height="27" fill="#1eff00"/><rect x="103" y="415" width="1" height="14" fill="#1eff00"/><rect x="106" y="415" width="1" height="14" fill="#1eff00"/><rect x="107" y="415" width="1" height="14" fill="#1eff00"/><rect x="108" y="349" width="1" height="80" fill="#1eff00"/><rect x="112" y="415" width="1" height="14" fill="#1eff00"/><rect x="113" y="389" width="1" height="40" fill="#1eff00"/><rect x="114" y="375" width="1" height="54" fill="#1eff00"/><rect x="115" y="389" width="1" height="40" fill="#1eff00"/><rect x="116" y="375" width="1" height="54" fill="#1eff00"/><rect x="117" y="389" width="1" height="40" fill="#1eff00"/><rect x="118" y="375" width="1" height="54" fill="#1eff00"/><rect x="120" y="402" width="1" height="27" fill="#1eff00"/><rect x="122" y="375" width="1" height="54" fill="#1eff00"/><rect x="123" y="389" width="1" height="40" fill="#1eff00"/><rect x="126" y="415" width="1" height="14" fill="#1eff00"/><rect x="129" y="389" width="1" height="40" fill="#1eff00"/><rect x="130" y="349" width="1" height="80" fill="#1eff00"/><rect x="131" y="389" width="1" height="40" fill="#1eff00"/><rect x="133" y="415" width="1" height="14" fill="#1eff00"/><rect x="134" y="415" width="1" height="14" fill="#1eff00"/><rect x="135" y="389" width="1" height="40" fill="#1eff00"/><rect x="139" y="415" width="1" height="14" fill="#1eff00"/><rect x="141" y="402" width="1" height="27" fill="#1eff00"/><rect x="151" y="415" width="1" height="14" fill="#1eff00"/><rect x="152" y="389" width="1" height="40" fill="#1eff00"/><rect x="153" y="415" width="1" height="14" fill="#1eff00"/><rect x="156" y="375" width="1" height="54" fill="#1eff00"/><rect x="157" y="415" width="1" height="14" fill="#1eff00"/><rect x="159" y="362" width="1" height="67" fill="#1eff00"/><rect x="160" y="389" width="1" height="40" fill="#1eff00"/><rect x="161" y="415" width="1" height="14" fill="#1eff00"/><rect x="163" y="415" width="1" height="14" fill="#1eff00"/><rect x="165" y="415" width="1" height="14" fill="#1eff00"/><rect x="170" y="389" width="1" height="40" fill="#1eff00"/><rect x="171" y="389" width="1" height="40" fill="#1eff00"/><rect x="172" y="389" width="1" height="40" fill="#1eff00"/><rect x="174" y="402" width="1" height="27" fill="#1eff00"/><rect x="175" y="349" width="1" height="80" fill="#1eff00"/><rect x="176" y="389" width="1" height="40" fill="#1eff00"/><rect x="177" y="402" width="1" height="27" fill="#1eff00"/><rect x="178" y="402" width="1" height="27" fill="#1eff00"/><rect x="188" y="415" width="1" height="14" fill="#1eff00"/><rect x="189" y="415" width="1" height="14" fill="#1eff00"/><rect x="193" y="389" width="1" height="40" fill="#1eff00"/><rect x="195" y="389" width="1" height="40" fill="#1eff00"/><rect x="196" y="415" width="1" height="14" fill="#1eff00"/><rect x="197" y="375" width="1" height="54" fill="#1eff00"/><rect x="198" y="362" width="1" height="67" fill="#1eff00"/><rect x="199" y="295" width="1" height="134" fill="#1eff00"/><rect x="200" y="335" width="1" height="94" fill="#1eff00"/><rect x="201" y="389" width="1" height="40" fill="#1eff00"/><rect x="204" y="402" width="1" height="27" fill="#1eff00"/><rect x="205" y="389" width="1" height="40" fill="#1eff00"/><rect x="206" y="375" width="1" height="54" fill="#1eff00"/><rect x="207" y="389" width="1" height="40" fill="#1eff00"/><rect x="208" y="402" width="1" height="27" fill="#1eff00"/><rect x="210" y="415" width="1" height="14" fill="#1eff00"/><rect x="211" y="415" width="1" height="14" fill="#1eff00"/><rect x="213" y="375" width="1" height="54" fill="#1eff00"/><rect x="214" y="415" width="1" height="14" fill="#1eff00"/><rect x="216" y="362" width="1" height="67" fill="#1eff00"/><rect x="219" y="402" width="1" height="27" fill="#1eff00"/><rect x="220" y="415" width="1" height="14" fill="#1eff00"/><rect x="221" y="389" width="1" height="40" fill="#1eff00"/><rect x="222" y="389" width="1" height="40" fill="#1eff00"/><rect x="223" y="375" width="1" height="54" fill="#1eff00"/><rect x="224" y="375" width="1" height="54" fill="#1eff00"/><rect x="225" y="375" width="1" height="54" fill="#1eff00"/><rect x="226" y="402" width="1" height="27" fill="#1eff00"/><rect x="227" y="415" width="1" height="14" fill="#1eff00"/><rect x="228" y="389" width="1" height="40" fill="#1eff00"/><rect x="229" y="375" width="1" height="54" fill="#1eff00"/><rect x="230" y="415" width="1" height="14" fill="#1eff00"/><rect x="231" y="375" width="1" height="54" fill="#1eff00"/><rect x="232" y="402" width="1" height="27" fill="#1eff00"/><rect x="235" y="415" width="1" height="14" fill="#1eff00"/><rect x="236" y="402" width="1" height="27" fill="#1eff00"/><rect x="237" y="415" width="1" height="14" fill="#1eff00"/><rect x="238" y="402" width="1" height="27" fill="#1eff00"/><rect x="239" y="415" width="1" height="14" fill="#1eff00"/><rect x="242" y="389" width="1" height="40" fill="#1eff00"/><rect x="244" y="415" width="1" height="14" fill="#1eff00"/><rect x="247" y="375" width="1" height="54" fill="#1eff00"/><rect x="248" y="415" width="1" height="14" fill="#1eff00"/><rect x="249" y="389" width="1" height="40" fill="#1eff00"/><rect x="250" y="389" width="1" height="40" fill="#1eff00"/><rect x="251" y="375" width="1" height="54" fill="#1eff00"/><rect x="252" y="375" width="1" height="54" fill="#1eff00"/><rect x="253" y="415" width="1" height="14" fill="#1eff00"/><rect x="256" y="375" width="1" height="54" fill="#1eff00"/><rect x="257" y="402" width="1" height="27" fill="#1eff00"/><rect x="258" y="389" width="1" height="40" fill="#1eff00"/><rect x="259" y="389" width="1" height="40" fill="#1eff00"/><rect x="262" y="415" width="1" height="14" fill="#1eff00"/><rect x="264" y="402" width="1" height="27" fill="#1eff00"/><rect x="268" y="402" width="1" height="27" fill="#1eff00"/><rect x="269" y="402" width="1" height="27" fill="#1eff00"/><rect x="271" y="362" width="1" height="67" fill="#1eff00"/><rect x="273" y="415" width="1" height="14" fill="#1eff00"/><rect x="277" y="389" width="1" height="40" fill="#1eff00"/><rect x="278" y="402" width="1" height="27" fill="#1eff00"/><rect x="279" y="415" width="1" height="14" fill="#1eff00"/><rect x="286" y="415" width="1" height="14" fill="#1eff00"/><rect x="287" y="402" width="1" height="27" fill="#1eff00"/><rect x="288" y="415" width="1" height="14" fill="#1eff00"/><rect x="290" y="415" width="1" height="14" fill="#1eff00"/><rect x="293" y="402" width="1" height="27" fill="#1eff00"/><rect x="295" y="415" width="1" height="14" fill="#1eff00"/><rect x="296" y="415" width="1" height="14" fill="#1eff00"/><rect x="297" y="389" width="1" height="40" fill="#1eff00"/><rect x="300" y="415" width="1" height="14" fill="#1eff00"/><rect x="301" y="402" width="1" height="27" fill="#1eff00"/><rect x="302" y="415" width="1" height="14" fill="#1eff00"/><rect x="303" y="402" width="1" height="27" fill="#1eff00"/><rect x="304" y="402" width="1" height="27" fill="#1eff00"/><rect x="306" y="415" width="1" height="14" fill="#1eff00"/><rect x="308" y="402" width="1" height="27" fill="#1eff00"/><rect x="309" y="402" width="1" height="27" fill="#1eff00"/><rect x="310" y="389" width="1" height="40" fill="#1eff00"/><rect x="312" y="415" width="1" height="14" fill="#1eff00"/><rect x="315" y="402" width="1" height="27" fill="#1eff00"/><rect x="316" y="415" width="1" height="14" fill="#1eff00"/><rect x="318" y="375" width="1" height="54" fill="#1eff00"/><rect x="319" y="402" width="1" height="27" fill="#1eff00"/><rect x="323" y="415" width="1" height="14" fill="#1eff00"/><rect x="325" y="402" width="1" height="27" fill="#1eff00"/><rect x="326" y="375" width="1" height="54" fill="#1eff00"/><rect x="328" y="402" width="1" height="27" fill="#1eff00"/><rect x="329" y="389" width="1" height="40" fill="#1eff00"/><rect x="330" y="389" width="1" height="40" fill="#1eff00"/><rect x="331" y="402" width="1" height="27" fill="#1eff00"/><rect x="333" y="415" width="1" height="14" fill="#1eff00"/><rect x="334" y="415" width="1" height="14" fill="#1eff00"/><rect x="335" y="415" width="1" height="14" fill="#1eff00"/><rect x="336" y="415" width="1" height="14" fill="#1eff00"/><rect x="337" y="402" width="1" height="27" fill="#1eff00"/><rect x="338" y="415" width="1" height="14" fill="#1eff00"/><rect x="341" y="389" width="1" height="40" fill="#1eff00"/><rect x="342" y="402" width="1" height="27" fill="#1eff00"/><rect x="343" y="402" width="1" height="27" fill="#1eff00"/><rect x="344" y="402" width="1" height="27" fill="#1eff00"/><rect x="346" y="402" width="1" height="27" fill="#1eff00"/><rect x="348" y="402" width="1" height="27" fill="#1eff00"/><rect x="349" y="402" width="1" height="27" fill="#1eff00"/><rect x="350" y="375" width="1" height="54" fill="#1eff00"/><rect x="351" y="375" width="1" height="54" fill="#1eff00"/><rect x="352" y="402" width="1" height="27" fill="#1eff00"/><rect x="355" y="415" width="1" height="14" fill="#1eff00"/><rect x="356" y="415" width="1" height="14" fill="#1eff00"/><rect x="359" y="375" width="1" height="54" fill="#1eff00"/><rect x="362" y="415" width="1" height="14" fill="#1eff00"/><rect x="363" y="415" width="1" height="14" fill="#1eff00"/><rect x="364" y="415" width="1" height="14" fill="#1eff00"/><rect x="365" y="415" width="1" height="14" fill="#1eff00"/><rect x="368" y="402" width="1" height="27" fill="#1eff00"/><rect x="369" y="402" width="1" height="27" fill="#1eff00"/><rect x="370" y="402" width="1" height="27" fill="#1eff00"/><rect x="373" y="415" width="1" height="14" fill="#1eff00"/><rect x="375" y="375" width="1" height="54" fill="#1eff00"/><rect x="376" y="415" width="1" height="14" fill="#1eff00"/><rect x="377" y="402" width="1" height="27" fill="#1eff00"/><rect x="379" y="415" width="1" height="14" fill="#1eff00"/><rect x="380" y="389" width="1" height="40" fill="#1eff00"/><rect x="381" y="415" width="1" height="14" fill="#1eff00"/><rect x="382" y="415" width="1" height="14" fill="#1eff00"/><rect x="383" y="415" width="1" height="14" fill="#1eff00"/><rect x="385" y="415" width="1" height="14" fill="#1eff00"/><rect x="386" y="415" width="1" height="14" fill="#1eff00"/><rect x="387" y="402" width="1" height="27" fill="#1eff00"/><rect x="389" y="415" width="1" height="14" fill="#1eff00"/><rect x="392" y="389" width="1" height="40" fill="#1eff00"/><rect x="393" y="389" width="1" height="40" fill="#1eff00"/><rect x="394" y="415" width="1" height="14" fill="#1eff00"/><rect x="395" y="415" width="1" height="14" fill="#1eff00"/><rect x="397" y="415" width="1" height="14" fill="#1eff00"/><rect x="398" y="402" width="1" height="27" fill="#1eff00"/><rect x="399" y="415" width="1" height="14" fill="#1eff00"/><rect x="400" y="389" width="1" height="40" fill="#1eff00"/><rect x="401" y="402" width="1" height="27" fill="#1eff00"/><rect x="403" y="415" width="1" height="14" fill="#1eff00"/><rect x="404" y="415" width="1" height="14" fill="#1eff00"/><rect x="405" y="402" width="1" height="27" fill="#1eff00"/><rect x="406" y="415" width="1" height="14" fill="#1eff00"/><rect x="407" y="402" width="1" height="27" fill="#1eff00"/><rect x="408" y="415" width="1" height="14" fill="#1eff00"/><rect x="409" y="415" width="1" height="14" fill="#1eff00"/><rect x="412" y="402" width="1" height="27" fill="#1eff00"/><rect x="413" y="415" width="1" height="14" fill="#1eff00"/><rect x="415" y="415" width="1" height="14" fill="#1eff00"/><rect x="416" y="402" width="1" height="27" fill="#1eff00"/><rect x="417" y="415" width="1" height="14" fill="#1eff00"/><rect x="419" y="349" width="1" height="80" fill="#1eff00"/><rect x="420" y="402" width="1" height="27" fill="#1eff00"/><rect x="421" y="415" width="1" height="14" fill="#1eff00"/><rect x="422" y="402" width="1" height="27" fill="#1eff00"/><rect x="424" y="415" width="1" height="14" fill="#1eff00"/><rect x="425" y="415" width="1" height="14" fill="#1eff00"/><rect x="426" y="415" width="1" height="14" fill="#1eff00"/><rect x="429" y="402" width="1" height="27" fill="#1eff00"/><rect x="430" y="402" width="1" height="27" fill="#1eff00"/><rect x="431" y="402" width="1" height="27" fill="#1eff00"/><rect x="432" y="375" width="1" height="54" fill="#1eff00"/><rect x="433" y="415" width="1" height="14" fill="#1eff00"/><rect x="434" y="415" width="1" height="14" fill="#1eff00"/><rect x="435" y="389" width="1" height="40" fill="#1eff00"/><rect x="436" y="415" width="1" height="14" fill="#1eff00"/><rect x="437" y="402" width="1" height="27" fill="#1eff00"/><rect x="438" y="402" width="1" height="27" fill="#1eff00"/><rect x="439" y="415" width="1" height="14" fill="#1eff00"/><rect x="440" y="402" width="1" height="27" fill="#1eff00"/><rect x="441" y="415" width="1" height="14" fill="#1eff00"/><rect x="442" y="415" width="1" height="14" fill="#1eff00"/><rect x="443" y="415" width="1" height="14" fill="#1eff00"/><rect x="444" y="402" width="1" height="27" fill="#1eff00"/><rect x="445" y="402" width="1" height="27" fill="#1eff00"/><rect x="446" y="402" width="1" height="27" fill="#1eff00"/><rect x="447" y="375" width="1" height="54" fill="#1eff00"/><rect x="448" y="415" width="1" height="14" fill="#1eff00"/><rect x="449" y="415" width="1" height="14" fill="#1eff00"/><rect x="450" y="402" width="1" height="27" fill="#1eff00"/><rect x="451" y="402" width="1" height="27" fill="#1eff00"/><rect x="452" y="415" width="1" height="14" fill="#1eff00"/><rect x="453" y="389" width="1" height="40" fill="#1eff00"/><rect x="45" y="295" width="3" height="1" fill="#0000ff"/><rect x="46" y="309" width="2" height="1" fill="#0000ff"/><rect x="45" y="322" width="3" height="1" fill="#0000ff"/><rect x="46" y="335" width="2" height="1" fill="#0000ff"/><rect x="45" y="349" width="3" height="1" fill="#0000ff"/><rect x="46" y="362" width="2" height="1" fill="#0000ff"/><rect x="45" y="375" width="3" height="1" fill="#0000ff"/><rect x="46" y="389" width="2" height="1" fill="#0000ff"/><rect x="45" y="402" width="3" height="1" fill="#0000ff"/><rect x="46" y="415" width="2" height="1" fill="#0000ff"/><rect x="45" y="428" width="3" height="1" fill="#0000ff"/><rect x="48" y="429" width="1" height="1" fill="#0000ff"/><rect x="57" y="429" width="1" height="1" fill="#0000ff"/><rect x="66" y="429" width="1" height="1" fill="#0000ff"/><rect x="75" y="429" width="1" height="1" fill="#0000ff"/><rect x="85" y="429" width="1" height="1" fill="#0000ff"/><rect x="94" y="429" width="1" height="1" fill="#0000ff"/><rect x="103" y="429" width="1" height="1" fill="#0000ff"/><rect x="113" y="429" width="1" height="1" fill="#0000ff"/><rect x="122" y="429" width="1" height="1" fill="#0000ff"/><rect x="131" y="429" width="1" height="1" fill="#0000ff"/><rect x="140" y="429" width="1" height="1" fill="#0000ff"/><rect x="150" y="429" width="1" height="1" fill="#0000ff"/><rect x="159" y="429" width="1" height="1" fill="#0000ff"/><rect x="168" y="429" width="1" height="1" fill="#0000ff"/><rect x="178" y="429" width="1" height="1" fill="#0000ff"/><rect x="187" y="429" width="1" height="1" fill="#0000ff"/><rect x="196" y="429" width="1" height="1" fill="#0000ff"/><rect x="205" y="429" width="1" height="1" fill="#0000ff"/><rect x="215" y="429" width="1" height="1" fill="#0000ff"/><rect x="224" y="429" width="1" height="1" fill="#0000ff"/><rect x="233" y="429" width="1" height="1" fill="#0000ff"/><rect x="243" y="429" width="1" height="1" fill="#0000ff"/><rect x="252" y="429" width="1" height="1" fill="#0000ff"/><rect x="261" y="429" width="1" height="1" fill="#0000ff"/><rect x="270" y="429" width="1" height="1" fill="#0000ff"/><rect x="280" y="429" width="1" height="1" fill="#0000ff"/><rect x="289" y="429" width="1" height="1" fill="#0000ff"/><rect x="298" y="429" width="1" height="1" fill="#0000ff"/><rect x="308" y="429" width="1" height="1" fill="#0000ff"/><rect x="317" y="429" width="1" height="1" fill="#0000ff"/><rect x="326" y="429" width="1" height="1" fill="#0000ff"/><rect x="335" y="429" width="1" height="1" fill="#0000ff"/><rect x="345" y="429" width="1" height="1" fill="#0000ff"/><rect x="354" y="429" width="1" height="1" fill="#0000ff"/><rect x="363" y="429" width="1" height="1" fill="#0000ff"/><rect x="373" y="429" width="1" height="1" fill="#0000ff"/><rect x="382" y="429" width="1" height="1" fill="#0000ff"/><rect x="391" y="429" width="1" height="1" fill="#0000ff"/><rect x="400" y="429" width="1" height="1" fill="#0000ff"/><rect x="410" y="429" width="1" height="1" fill="#0000ff"/><rect x="419" y="429" width="1" height="1" fill="#0000ff"/><rect x="428" y="429" width="1" height="1" fill="#0000ff"/><rect x="438" y="429" width="1" height="1" fill="#0000ff"/><rect x="447" y="429" width="1" height="1" fill="#0000ff"/><rect x="456" y="429" width="1" height="1" fill="#0000ff"/><rect x="466" y="429" width="1" height="1" fill="#0000ff"/></svg><div class="o" style="right:599px;top:126px;"><div class="t r" style="color:#000;text-align:right;">50</div></div>
<div class="o" style="right:599px;top:153px;"><div class="t r" style="color:#000;text-align:right;">40</div></div>
<div class="o" style="right:599px;top:180px;"><div class="t r" style="color:#000;text-align:right;">30</div></div>
<div class="o" style="right:599px;top:206px;"><div class="t r" style="color:#000;text-align:right;">20</div></div>
<div class="o" style="right:599px;top:233px;"><div class="t r" style="color:#000;text-align:right;">10</div></div>
<div class="o" style="left:471px;top:126px;"><div class="t" style="color:#000;">16</div></div>
<div class="o" style="left:471px;top:143px;"><div class="t" style="color:#000;">14</div></div>
<div class="o" style="left:471px;top:159px;"><div class="t" style="color:#000;">12</div></div>
<div class="o" style="left:471px;top:176px;"><div class="t" style="color:#000;">10</div></div>
<div class="o" style="left:471px;top:193px;"><div class="t" style="color:#000;">8</div></div>
<div class="o" style="left:471px;top:209px;"><div class="t" style="color:#000;">6</div></div>
<div class="o" style="left:471px;top:226px;"><div class="t" style="color:#000;">4</div></div>
<div class="o" style="left:471px;top:242px;"><div class="t" style="color:#000;">2</div></div>
<div class="o" style="left:43px;top:270px;"><div class="t" style="color:#000;">0.0</div></div>
<div class="o" style="left:89px;top:270px;"><div class="t" style="color:#000;">0.5</div></div>
<div class="o" style="left:135px;top:270px;"><div class="t" style="color:#000;">1.0</div></div>
<div class="o" style="left:182px;top:270px;"><div class="t" style="color:#000;">1.5</div></div>
<div class="o" style="left:228px;top:270px;"><div class="t" style="color:#000;">2.0</div></div>
<div class="o" style="left:275px;top:270px;"><div class="t" style="color:#000;">2.5</div></div>
<div class="o" style="left:321px;top:270px;"><div class="t" style="color:#000;">3.0</div></div>
<div class="o" style="left:368px;top:270px;"><div class="t" style="color:#000;">3.5</div></div>
<div class="o" style="left:414px;top:270px;"><div class="t" style="color:#000;">4.0</div></div>
<div class="o" style="left:461px;top:270px;"><div class="t" style="color:#000;">4.5</div></div><div class="o" style="right:599px;top:288px;"><div class="t r" style="color:#000;text-align:right;">10</div></div>
<div class="o" style="right:599px;top:315px;"><div class="t r" style="color:#000;text-align:right;">8</div></div>
<div class="o" style="right:599px;top:342px;"><div class="t r" style="color:#000;text-align:right;">6</div></div>
<div class="o" style="right:599px;top:368px;"><div class="t r" style="color:#000;text-align:right;">4</div></div>
<div class="o" style="right:599px;top:395px;"><div class="t r" style="color:#000;text-align:right;">2</div></div>
<div class="o" style="left:471px;top:288px;"><div class="t" style="color:#000;">20</div></div>
<div class="o" style="left:471px;top:315px;"><div class="t" style="color:#000;">16</div></div>
<div class="o" style="left:471px;top:341px;"><div class="t" style="color:#000;">12</div></div>
<div class="o" style="left:471px;top:368px;"><div class="t" style="color:#000;">8</div></div>
<div class="o" style="left:471px;top:394px;"><div class="t" style="color:#000;">4</div></div>
<div class="o" style="left:43px;top:432px;"><div class="t" style="color:#000;">0.0</div></div>
<div class="o" style="left:89px;top:432px;"><div class="t" style="color:#000;">0.5</div></div>
<div class="o" style="left:135px;top:432px;"><div class="t" style="color:#000;">1.0</div></div>
<div class="o" style="left:182px;top:432px;"><div class="t" style="color:#000;">1.5</div></div>
<div class="o" style="left:228px;top:432px;"><div class="t" style="color:#000;">2.0</div></div>
<div class="o" style="left:275px;top:432px;"><div class="t" style="color:#000;">2.5</div></div>
<div class="o" style="left:321px;top:432px;"><div class="t" style="color:#000;">3.0</div></div>
<div class="o" style="left:368px;top:432px;"><div class="t" style="color:#000;">3.5</div></div>
<div class="o" style="left:414px;top:432px;"><div class="t" style="color:#000;">4.0</div></div>
<div class="o" style="left:461px;top:432px;"><div class="t" style="color:#000;">4.5</div></div><div style="position:absolute;left:492px;top:127px;width:139px;height:83px;box-sizing:border-box;border:1px solid #fff;"></div>
<div style="position:absolute;left:491px;top:126px;width:139px;height:83px;box-sizing:border-box;border:1px solid #808080;"></div>
<div style="position:absolute;left:498px;top:126px;width:45px;height:2px;background:#d4d0c8"></div>
<div class="o" style="left:500px;top:121px;"><div class="t" style="color:#000;">Disc info</div></div>
<div class="o" style="left:499px;top:136px;"><div class="t" style="color:#000;">Type:</div></div>
<div class="o" style="left:545px;top:136px;"><div class="t" style="color:#000080;">DVD-RW</div></div>
<div class="o" style="left:499px;top:153px;"><div class="t" style="color:#000;">ID:</div></div>
<div class="o" style="left:545px;top:153px;"><div class="t" style="color:#000080;">TDK601saku</div></div>
<div class="o" style="left:499px;top:171px;"><div class="t" style="color:#000;">Date:</div></div>
<div class="o" style="left:545px;top:171px;"><div class="t" style="color:#000080;">n/a</div></div>
<div class="o" style="left:499px;top:189px;"><div class="t" style="color:#000;">Label:</div></div>
<div class="o" style="left:545px;top:189px;"><div class="t" style="color:#000080;">n/a</div></div>
<div style="position:absolute;left:492px;top:218px;width:139px;height:203px;box-sizing:border-box;border:1px solid #fff;"></div>
<div style="position:absolute;left:491px;top:217px;width:139px;height:203px;box-sizing:border-box;border:1px solid #808080;"></div>
<div style="position:absolute;left:498px;top:217px;width:42px;height:2px;background:#d4d0c8"></div>
<div class="o" style="left:500px;top:212px;"><div class="t" style="color:#000;">Settings</div></div>
<div class="o" style="left:500px;top:227px;"><div class="t" style="color:#000;">Speed:</div></div>
<div style="position:absolute;left:500px;top:242px;width:84px;height:21px;box-sizing:border-box;border-top:1px solid #808080;border-left:1px solid #808080;border-right:1px solid #fff;border-bottom:1px solid #fff;"><div style="position:absolute;left:0;top:0;right:0;bottom:0;border-top:1px solid #404040;border-left:1px solid #404040;border-right:1px solid #d4d0c8;border-bottom:1px solid #d4d0c8;background:#fff"></div></div>
<div style="position:absolute;left:572px;top:244px;width:10px;height:17px;box-sizing:border-box;border-top:1px solid #fff;border-left:1px solid #fff;border-right:1px solid #404040;border-bottom:1px solid #404040;background:#d4d0c8;"><div style="position:absolute;left:0;top:0;right:0;bottom:0;border-right:1px solid #808080;border-bottom:1px solid #808080;"></div></div>
<div style="position:absolute;left:574px;top:251px;width:5px;height:1px;background:#000"></div><div style="position:absolute;left:575px;top:252px;width:3px;height:1px;background:#000"></div><div style="position:absolute;left:576px;top:253px;width:1px;height:1px;background:#000"></div>
<div class="o" style="left:504px;top:247px;"><div class="t" style="color:#000;">6 X CLV</div></div>
<div style="position:absolute;left:592px;top:240px;width:23px;height:23px;box-sizing:border-box;border-top:1px solid #fff;border-left:1px solid #fff;border-right:1px solid #404040;border-bottom:1px solid #404040;background:#d4d0c8;"><div style="position:absolute;left:0;top:0;right:0;bottom:0;border-right:1px solid #808080;border-bottom:1px solid #808080;"></div></div>
<div style="position:absolute;left:596px;top:243px;width:14px;height:16px;box-sizing:border-box;border:1px solid #000;background:#fff"></div>
<svg style="position:absolute;left:596px;top:243px" width="14" height="16" viewBox="0 0 14 16" shape-rendering="crispEdges"><rect x="3" y="4" width="1" height="4" fill="#008000"/><rect x="3" y="4" width="4" height="1.4" fill="#008000"/><polygon points="6,1.5 9.5,4.6 6,7.7" fill="#008000" shape-rendering="auto"/><rect x="10" y="8" width="1" height="4" fill="#008000"/><rect x="7" y="10.6" width="4" height="1.4" fill="#008000"/><polygon points="8,8.3 4.5,11.4 8,14.5" fill="#008000" shape-rendering="auto"/></svg>
<div class="o" style="left:502px;top:274px;"><div class="t" style="color:#000;">Start:</div></div>
<div style="position:absolute;left:554px;top:268px;width:60px;height:20px;box-sizing:border-box;border-top:1px solid #808080;border-left:1px solid #808080;border-right:1px solid #fff;border-bottom:1px solid #fff;"><div style="position:absolute;left:0;top:0;right:0;bottom:0;border-top:1px solid #404040;border-left:1px solid #404040;border-right:1px solid #d4d0c8;border-bottom:1px solid #d4d0c8;background:#fff"></div></div>
<div class="o" style="left:558px;top:272px;"><div class="t" style="color:#000;">0000 MB</div></div>
<div class="o" style="left:502px;top:296px;"><div class="t" style="color:#000;">End:</div></div>
<div style="position:absolute;left:554px;top:291px;width:60px;height:20px;box-sizing:border-box;border-top:1px solid #808080;border-left:1px solid #808080;border-right:1px solid #fff;border-bottom:1px solid #fff;"><div style="position:absolute;left:0;top:0;right:0;bottom:0;border-top:1px solid #404040;border-left:1px solid #404040;border-right:1px solid #d4d0c8;border-bottom:1px solid #d4d0c8;background:#fff"></div></div>
<div class="o" style="left:558px;top:295px;"><div class="t" style="color:#000;">4474 MB</div></div>
<div style="position:absolute;left:502px;top:316px;width:13px;height:13px;box-sizing:border-box;border-top:1px solid #808080;border-left:1px solid #808080;border-right:1px solid #fff;border-bottom:1px solid #fff;"><div style="position:absolute;left:0;top:0;right:0;bottom:0;border-top:1px solid #404040;border-left:1px solid #404040;border-right:1px solid #d4d0c8;border-bottom:1px solid #d4d0c8;background:#fff"></div></div>
<div class="o" style="left:521px;top:317px;"><div class="t" style="color:#000;">Quick scan</div></div>
<div style="position:absolute;left:502px;top:337px;width:13px;height:13px;box-sizing:border-box;border-top:1px solid #808080;border-left:1px solid #808080;border-right:1px solid #fff;border-bottom:1px solid #fff;"><div style="position:absolute;left:0;top:0;right:0;bottom:0;border-top:1px solid #404040;border-left:1px solid #404040;border-right:1px solid #d4d0c8;border-bottom:1px solid #d4d0c8;background:#fff"></div></div>
<svg style="position:absolute;left:505px;top:340px" width="7" height="7"><path d="M0 2h1v1h1v1h1v-1h1v-1h1v-1h1v-1h1v3h-1v1h-1v1h-1v1h-1v1h-1v-1h-1v-1h-1v-1h-1z" fill="#000"/></svg>
<div class="o" style="left:521px;top:338px;"><div class="t" style="color:#000;">Show C1/PIE</div></div>
<div style="position:absolute;left:502px;top:353px;width:13px;height:13px;box-sizing:border-box;border-top:1px solid #808080;border-left:1px solid #808080;border-right:1px solid #fff;border-bottom:1px solid #fff;"><div style="position:absolute;left:0;top:0;right:0;bottom:0;border-top:1px solid #404040;border-left:1px solid #404040;border-right:1px solid #d4d0c8;border-bottom:1px solid #d4d0c8;background:#fff"></div></div>
<svg style="position:absolute;left:505px;top:356px" width="7" height="7"><path d="M0 2h1v1h1v1h1v-1h1v-1h1v-1h1v-1h1v3h-1v1h-1v1h-1v1h-1v1h-1v-1h-1v-1h-1v-1h-1z" fill="#000"/></svg>
<div class="o" style="left:521px;top:354px;"><div class="t" style="color:#000;">Show C2/PIF</div></div>
<div style="position:absolute;left:502px;top:370px;width:13px;height:13px;box-sizing:border-box;border-top:1px solid #808080;border-left:1px solid #808080;border-right:1px solid #fff;border-bottom:1px solid #fff;"><div style="position:absolute;left:0;top:0;right:0;bottom:0;border-top:1px solid #404040;border-left:1px solid #404040;border-right:1px solid #d4d0c8;border-bottom:1px solid #d4d0c8;background:#fff"></div></div>
<svg style="position:absolute;left:505px;top:373px" width="7" height="7"><path d="M0 2h1v1h1v1h1v-1h1v-1h1v-1h1v-1h1v3h-1v1h-1v1h-1v1h-1v1h-1v-1h-1v-1h-1v-1h-1z" fill="#000"/></svg>
<div class="o" style="left:521px;top:371px;"><div class="t" style="color:#000;">Show jitter</div></div>
<div style="position:absolute;left:502px;top:386px;width:13px;height:13px;box-sizing:border-box;border-top:1px solid #808080;border-left:1px solid #808080;border-right:1px solid #fff;border-bottom:1px solid #fff;"><div style="position:absolute;left:0;top:0;right:0;bottom:0;border-top:1px solid #404040;border-left:1px solid #404040;border-right:1px solid #d4d0c8;border-bottom:1px solid #d4d0c8;background:#fff"></div></div>
<svg style="position:absolute;left:505px;top:389px" width="7" height="7"><path d="M0 2h1v1h1v1h1v-1h1v-1h1v-1h1v-1h1v3h-1v1h-1v1h-1v1h-1v1h-1v-1h-1v-1h-1v-1h-1z" fill="#000"/></svg>
<div class="o" style="left:521px;top:387px;"><div class="t" style="color:#000;">Show read speed</div></div>
<div style="position:absolute;left:502px;top:402px;width:13px;height:13px;box-sizing:border-box;border-top:1px solid #808080;border-left:1px solid #808080;border-right:1px solid #fff;border-bottom:1px solid #fff;"><div style="position:absolute;left:0;top:0;right:0;bottom:0;border-top:1px solid #404040;border-left:1px solid #404040;border-right:1px solid #d4d0c8;border-bottom:1px solid #d4d0c8;background:#d4d0c8"></div></div>
<svg style="position:absolute;left:505px;top:405px" width="7" height="7"><path d="M0 2h1v1h1v1h1v-1h1v-1h1v-1h1v-1h1v3h-1v1h-1v1h-1v1h-1v1h-1v-1h-1v-1h-1v-1h-1z" fill="#808080"/></svg>
<div class="o" style="left:522px;top:404px;"><div class="t" style="color:#fff;">Show write speed</div></div>
<div class="o" style="left:521px;top:403px;"><div class="t" style="color:#808080;">Show write speed</div></div>
<div style="position:absolute;left:492px;top:428px;width:139px;height:25px;box-sizing:border-box;border:1px solid #fff;"></div>
<div style="position:absolute;left:491px;top:427px;width:139px;height:25px;box-sizing:border-box;border:1px solid #808080;"></div>
<div class="o" style="left:502px;top:435px;"><div class="t" style="color:#000;">Quality score:</div></div>
<div class="o" style="right:21px;top:435px;"><div class="t r" style="color:#000080;text-align:right;">94</div></div>
<div style="position:absolute;left:492px;top:460px;width:139px;height:56px;box-sizing:border-box;border:1px solid #fff;"></div>
<div style="position:absolute;left:491px;top:459px;width:139px;height:56px;box-sizing:border-box;border:1px solid #808080;"></div>
<div class="o" style="left:502px;top:470px;"><div class="t" style="color:#000;">Progress:</div></div>
<div class="o" style="right:20px;top:470px;"><div class="t r" style="color:#000080;text-align:right;">100 %</div></div>
<div class="o" style="left:502px;top:485px;"><div class="t" style="color:#000;">Position:</div></div>
<div class="o" style="right:20px;top:485px;"><div class="t r" style="color:#000080;text-align:right;">4473 MB</div></div>
<div class="o" style="left:502px;top:500px;"><div class="t" style="color:#000;">Speed:</div></div>
<div class="o" style="right:20px;top:500px;"><div class="t r" style="color:#000080;text-align:right;">6.03 X</div></div><div style="position:absolute;left:15px;top:460px;width:146px;height:57px;box-sizing:border-box;border:1px solid #fff;"></div>
<div style="position:absolute;left:14px;top:459px;width:146px;height:57px;box-sizing:border-box;border:1px solid #808080;"></div>
<div style="position:absolute;left:22px;top:459px;width:55px;height:2px;background:#d4d0c8"></div>
<div style="position:absolute;left:24px;top:456px;width:8px;height:8px;box-sizing:border-box;border:1px solid #000;background:#00ffff"></div>
<div class="o" style="left:35px;top:454px;"><div class="t" style="color:#000;">PI Errors</div></div>
<div class="o" style="left:22px;top:470px;"><div class="t" style="color:#000;">Average:</div></div>
<div class="o" style="right:490px;top:470px;"><div class="t r" style="color:#000080;text-align:right;">20.42</div></div>
<div class="o" style="left:22px;top:485px;"><div class="t" style="color:#000;">Maximum:</div></div>
<div class="o" style="right:490px;top:485px;"><div class="t r" style="color:#000080;text-align:right;">45</div></div>
<div class="o" style="left:22px;top:500px;"><div class="t" style="color:#000;">Total:</div></div>
<div class="o" style="right:490px;top:500px;"><div class="t r" style="color:#000080;text-align:right;">287620</div></div>
<div style="position:absolute;left:173px;top:460px;width:146px;height:57px;box-sizing:border-box;border:1px solid #fff;"></div>
<div style="position:absolute;left:172px;top:459px;width:146px;height:57px;box-sizing:border-box;border:1px solid #808080;"></div>
<div style="position:absolute;left:180px;top:459px;width:63px;height:2px;background:#d4d0c8"></div>
<div style="position:absolute;left:182px;top:456px;width:8px;height:8px;box-sizing:border-box;border:1px solid #000;background:#ffff00"></div>
<div class="o" style="left:193px;top:454px;"><div class="t" style="color:#000;">PI Failures</div></div>
<div class="o" style="left:181px;top:470px;"><div class="t" style="color:#000;">Average:</div></div>
<div class="o" style="right:331px;top:470px;"><div class="t r" style="color:#000080;text-align:right;">0.36</div></div>
<div class="o" style="left:181px;top:485px;"><div class="t" style="color:#000;">Maximum:</div></div>
<div class="o" style="right:331px;top:485px;"><div class="t r" style="color:#000080;text-align:right;">10</div></div>
<div class="o" style="left:181px;top:500px;"><div class="t" style="color:#000;">Total:</div></div>
<div class="o" style="right:331px;top:500px;"><div class="t r" style="color:#000080;text-align:right;">3551</div></div>
<div style="position:absolute;left:332px;top:460px;width:147px;height:43px;box-sizing:border-box;border:1px solid #fff;"></div>
<div style="position:absolute;left:331px;top:459px;width:147px;height:43px;box-sizing:border-box;border:1px solid #808080;"></div>
<div style="position:absolute;left:339px;top:459px;width:35px;height:2px;background:#d4d0c8"></div>
<div style="position:absolute;left:341px;top:456px;width:8px;height:8px;box-sizing:border-box;border:1px solid #000;background:#ff00ff"></div>
<div class="o" style="left:352px;top:454px;"><div class="t" style="color:#000;">Jitter</div></div>
<div class="o" style="left:340px;top:470px;"><div class="t" style="color:#000;">Average:</div></div>
<div class="o" style="right:172px;top:470px;"><div class="t r" style="color:#000080;text-align:right;">10.48 %</div></div>
<div class="o" style="left:340px;top:485px;"><div class="t" style="color:#000;">Maximum:</div></div>
<div class="o" style="right:172px;top:485px;"><div class="t r" style="color:#000080;text-align:right;">12.5 %</div></div>
<div class="o" style="left:340px;top:504px;"><div class="t" style="color:#000;">PO failures:</div></div>
<div class="o" style="right:172px;top:504px;"><div class="t r" style="color:#000080;text-align:right;">0</div></div></body></html>
